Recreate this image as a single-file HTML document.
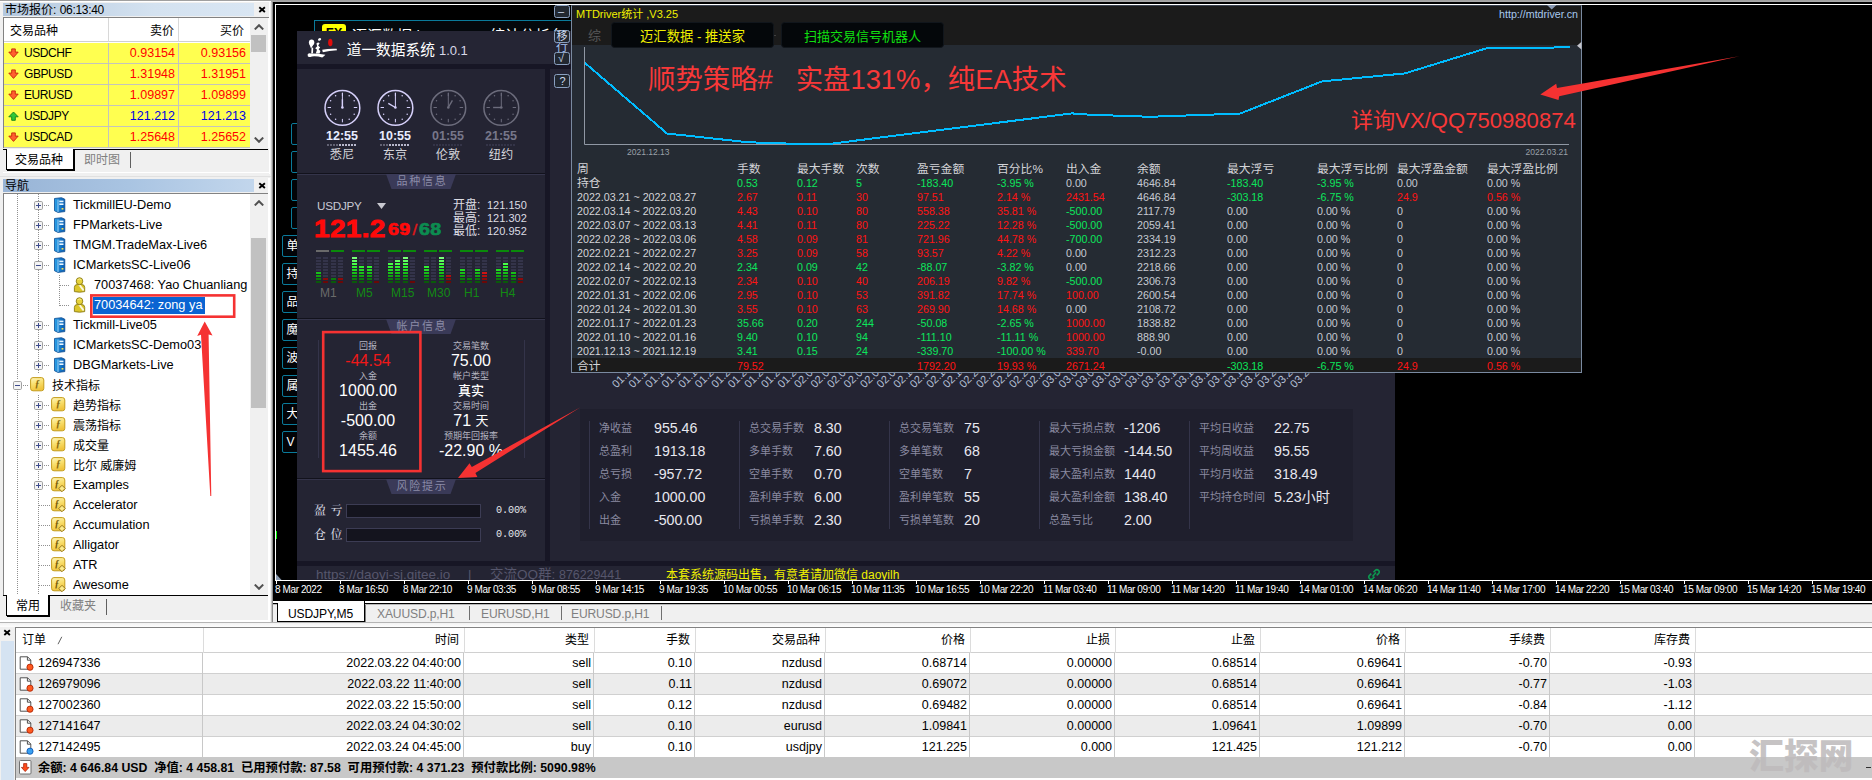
<!DOCTYPE html>
<html lang="zh-CN"><head><meta charset="utf-8"><title>MT4</title>
<style>
*{box-sizing:border-box;margin:0;padding:0}
html,body{width:1872px;height:780px;overflow:hidden;background:#f0f0f0}
body{position:relative;font-family:"Liberation Sans","Noto Sans CJK SC",sans-serif;font-size:12px;color:#000;line-height:1}
.a{position:absolute;white-space:nowrap}
.t{position:absolute;white-space:nowrap;line-height:16px;height:16px}
.r{text-align:right}
.c{text-align:center}
/* left panel */
.ui{font-size:12px}
.la{font-size:12.75px;letter-spacing:0px}
.sy{font-size:12px;letter-spacing:-.42px}
.pr{font-size:12.5px}
.cap{background:linear-gradient(90deg,#b4c8de 0%,#d4e2f0 60%,#d9e6f3 100%)}
/* mtdriver */
.m{font-size:10.7px;color:#c6cad2}
.red{color:#ff1414}.grn{color:#0ce65c}
.lbl{color:#8a8aa0;font-size:11px}
.val{color:#e8e8f0;font-size:14.2px}
</style></head><body>

<svg width="0" height="0" style="position:absolute"><defs><linearGradient id="sg" x1="0" x2="1"><stop offset="0" stop-color="#2aa0e8"/><stop offset="1" stop-color="#0a5cb0"/></linearGradient><linearGradient id="fg" x1="0" y1="0" x2=".3" y2="1"><stop offset="0" stop-color="#fef6c0"/><stop offset=".5" stop-color="#f9e070"/><stop offset="1" stop-color="#f0c43c"/></linearGradient></defs></svg>
<div class="a" style="left:0;top:0;width:1872px;height:1px;background:#a0a0a0"></div>
<div class="a" style="left:0;top:1px;width:271px;height:1px;background:#fff"></div>
<div class="a" style="left:271px;top:1px;width:1601px;height:1px;background:#a8a8a8"></div>
<div class="a" style="left:0;top:2px;width:271px;height:172px;background:#f0f0f0"></div>
<div class="a cap" style="left:3px;top:3px;width:251px;height:13px"></div>
<div class="t ui" style="left:5px;top:2px;font-size:12px">市场报价: <span style="letter-spacing:-.3px">06:13:40</span></div>
<svg class="a" style="left:258px;top:6px" width="8" height="7" viewBox="0 0 8 7"><path d="M1.300 1.200L6.900 5.900M6.900 1.200L1.300 5.900" stroke="#000" stroke-width="1.900"/></svg>
<div class="a" style="left:3px;top:17px;width:266px;height:131px;background:#fff;border-top:1px solid #828282;border-left:1px solid #828282"></div>
<div class="a" style="left:4px;top:18px;width:246px;height:24px;background:#fff;border-bottom:1px solid #d0d0d0"></div>
<div class="a" style="left:108px;top:18px;width:1px;height:24px;background:#d8d8d8"></div>
<div class="a" style="left:178px;top:18px;width:1px;height:24px;background:#d8d8d8"></div>
<div class="t ui" style="left:10px;top:23px">交易品种</div>
<div class="t ui r" style="left:110px;top:23px;width:64px">卖价</div>
<div class="t ui r" style="left:180px;top:23px;width:64px">买价</div>
<div class="a" style="left:4px;top:43px;width:246px;height:21px;background:#ffff50;border-bottom:1px solid #c4c4bc"></div>
<div class="a" style="left:108px;top:43px;width:1px;height:21px;background:#c4c4bc"></div>
<div class="a" style="left:178px;top:43px;width:1px;height:21px;background:#c4c4bc"></div>
<svg class="a" style="left:8px;top:48px" width="11" height="11" viewBox="0 0 11 11"><path d="M5.500 9.400L10.200 4.100H7.300V.9H3.700V4.100H.8Z" fill="#ff6030" stroke="#c42408" stroke-width=".9"/></svg>
<div class="t sy" style="left:24px;top:45px">USDCHF</div>
<div class="t pr r" style="left:110px;top:45px;width:65px;color:#ff0000">0.93154</div>
<div class="t pr r" style="left:180px;top:45px;width:66px;color:#ff0000">0.93156</div>
<div class="a" style="left:4px;top:64px;width:246px;height:21px;background:#ffff50;border-bottom:1px solid #c4c4bc"></div>
<div class="a" style="left:108px;top:64px;width:1px;height:21px;background:#c4c4bc"></div>
<div class="a" style="left:178px;top:64px;width:1px;height:21px;background:#c4c4bc"></div>
<svg class="a" style="left:8px;top:69px" width="11" height="11" viewBox="0 0 11 11"><path d="M5.500 9.400L10.200 4.100H7.300V.9H3.700V4.100H.8Z" fill="#ff6030" stroke="#c42408" stroke-width=".9"/></svg>
<div class="t sy" style="left:24px;top:66px">GBPUSD</div>
<div class="t pr r" style="left:110px;top:66px;width:65px;color:#ff0000">1.31948</div>
<div class="t pr r" style="left:180px;top:66px;width:66px;color:#ff0000">1.31951</div>
<div class="a" style="left:4px;top:85px;width:246px;height:21px;background:#ffff50;border-bottom:1px solid #c4c4bc"></div>
<div class="a" style="left:108px;top:85px;width:1px;height:21px;background:#c4c4bc"></div>
<div class="a" style="left:178px;top:85px;width:1px;height:21px;background:#c4c4bc"></div>
<svg class="a" style="left:8px;top:90px" width="11" height="11" viewBox="0 0 11 11"><path d="M5.500 9.400L10.200 4.100H7.300V.9H3.700V4.100H.8Z" fill="#ff6030" stroke="#c42408" stroke-width=".9"/></svg>
<div class="t sy" style="left:24px;top:87px">EURUSD</div>
<div class="t pr r" style="left:110px;top:87px;width:65px;color:#ff0000">1.09897</div>
<div class="t pr r" style="left:180px;top:87px;width:66px;color:#ff0000">1.09899</div>
<div class="a" style="left:4px;top:106px;width:246px;height:21px;background:#ffff50;border-bottom:1px solid #c4c4bc"></div>
<div class="a" style="left:108px;top:106px;width:1px;height:21px;background:#c4c4bc"></div>
<div class="a" style="left:178px;top:106px;width:1px;height:21px;background:#c4c4bc"></div>
<svg class="a" style="left:8px;top:111px" width="11" height="11" viewBox="0 0 11 11"><path d="M5.500 1L10.200 5.800H7.300V9.300H3.700V5.800H.8Z" fill="#30c838" stroke="#108018" stroke-width=".9"/></svg>
<div class="t sy" style="left:24px;top:108px">USDJPY</div>
<div class="t pr r" style="left:110px;top:108px;width:65px;color:#0000e0">121.212</div>
<div class="t pr r" style="left:180px;top:108px;width:66px;color:#0000e0">121.213</div>
<div class="a" style="left:4px;top:127px;width:246px;height:21px;background:#ffff50;border-bottom:1px solid #c4c4bc"></div>
<div class="a" style="left:108px;top:127px;width:1px;height:21px;background:#c4c4bc"></div>
<div class="a" style="left:178px;top:127px;width:1px;height:21px;background:#c4c4bc"></div>
<svg class="a" style="left:8px;top:132px" width="11" height="11" viewBox="0 0 11 11"><path d="M5.500 9.400L10.200 4.100H7.300V.9H3.700V4.100H.8Z" fill="#ff6030" stroke="#c42408" stroke-width=".9"/></svg>
<div class="t sy" style="left:24px;top:129px">USDCAD</div>
<div class="t pr r" style="left:110px;top:129px;width:65px;color:#ff0000">1.25648</div>
<div class="t pr r" style="left:180px;top:129px;width:66px;color:#ff0000">1.25652</div>
<div class="a" style="left:250px;top:18px;width:18px;height:130px;background:#f0f0f0"></div>
<svg class="a" style="left:254px;top:24px" width="10" height="6" viewBox="0 0 10 6"><path d="M.8 5.400L5 1.200L9.200 5.400" stroke="#505050" stroke-width="2" fill="none"/></svg>
<div class="a" style="left:251px;top:35px;width:15px;height:17px;background:#c1c1c1"></div>
<svg class="a" style="left:254px;top:137px" width="10" height="6" viewBox="0 0 10 6"><path d="M.8 .6L5 4.800L9.200 .6" stroke="#505050" stroke-width="2" fill="none"/></svg>
<div class="a" style="left:3px;top:149px;width:265px;height:1px;background:#000"></div>
<div class="a" style="left:6px;top:149px;width:68px;height:21px;background:#fff;border:1px solid #000;border-top:none;box-shadow:1px 1px 0 #000"></div>
<div class="t ui" style="left:15px;top:152px">交易品种</div>
<div class="t ui" style="left:84px;top:152px;color:#808080">即时图</div>
<div class="a" style="left:130px;top:152px;width:1px;height:16px;background:#606060"></div>
<div class="a" style="left:3px;top:172px;width:266px;height:1px;background:#fff"></div>
<div class="a" style="left:269px;top:2px;width:1px;height:172px;background:#fff"></div>
<div class="a" style="left:0px;top:176px;width:271px;height:1px;background:#e0e0e0"></div>
<div class="a" style="left:3px;top:179px;width:251px;height:13px;background:linear-gradient(90deg,#98b4d6,#a9c4e2 50%,#c2d6ec)"></div>
<div class="t ui" style="left:5px;top:178px;font-size:12px">导航</div>
<svg class="a" style="left:258px;top:182px" width="8" height="7" viewBox="0 0 8 7"><path d="M1.300 1.200L6.900 5.900M6.900 1.200L1.300 5.900" stroke="#000" stroke-width="1.900"/></svg>
<div class="a" style="left:3px;top:193px;width:266px;height:402px;background:#fff;border-top:1px solid #828282;border-left:1px solid #828282"></div>
<div class="a" style="left:250px;top:194px;width:18px;height:401px;background:#f0f0f0"></div>
<svg class="a" style="left:254px;top:200px" width="10" height="6" viewBox="0 0 10 6"><path d="M.8 5.400L5 1.200L9.200 5.400" stroke="#505050" stroke-width="2" fill="none"/></svg>
<div class="a" style="left:251px;top:238px;width:15px;height:170px;background:#c1c1c1"></div>
<svg class="a" style="left:254px;top:584px" width="10" height="6" viewBox="0 0 10 6"><path d="M.8 .6L5 4.800L9.200 .6" stroke="#505050" stroke-width="2" fill="none"/></svg>
<div class="a" style="left:17px;top:194px;width:1px;height:186px;background:repeating-linear-gradient(180deg,#909090 0 1px,transparent 1px 2px)"></div>
<div class="a" style="left:17px;top:391px;width:1px;height:204px;background:repeating-linear-gradient(180deg,#909090 0 1px,transparent 1px 2px)"></div>
<div class="a" style="left:38px;top:194px;width:1px;height:180px;background:repeating-linear-gradient(180deg,#909090 0 1px,transparent 1px 2px)"></div>
<div class="a" style="left:38px;top:395px;width:1px;height:200px;background:repeating-linear-gradient(180deg,#909090 0 1px,transparent 1px 2px)"></div>
<svg class="a" style="left:34px;top:201px" width="9" height="9" viewBox="0 0 9 9"><rect x=".5" y=".5" width="8" height="8" rx="1.2" fill="#f4f4f4" stroke="#a0a0a0"/><path d="M2 4.5H7M4.5 2V7" stroke="#3c4a8c" stroke-width="1"/></svg>
<div class="a" style="left:44px;top:205px;width:6px;height:1px;background:repeating-linear-gradient(90deg,#909090 0 1px,transparent 1px 2px)"></div>
<svg class="a" style="left:53px;top:197px" width="13" height="16" viewBox="0 0 13 16"><path d="M1.5 1.5L8.5 .7L11.8 2.2V14.6L5 15.4L1.5 13.8Z" fill="url(#sg)" stroke="#0a4a90" stroke-width=".8"/><path d="M5 2.6V15" stroke="#bfe4ff" stroke-width=".8"/><rect x="6.3" y="3.6" width="4.2" height="1.6" fill="#e8f6ff"/><rect x="6.3" y="6.4" width="4.2" height="1.6" fill="#e8f6ff"/><rect x="8.6" y="11" width="1.8" height="1.6" fill="#ffe24a"/></svg>
<div class="t la" style="left:73px;top:197px">TickmillEU-Demo</div>
<svg class="a" style="left:34px;top:221px" width="9" height="9" viewBox="0 0 9 9"><rect x=".5" y=".5" width="8" height="8" rx="1.2" fill="#f4f4f4" stroke="#a0a0a0"/><path d="M2 4.5H7M4.5 2V7" stroke="#3c4a8c" stroke-width="1"/></svg>
<div class="a" style="left:44px;top:225px;width:6px;height:1px;background:repeating-linear-gradient(90deg,#909090 0 1px,transparent 1px 2px)"></div>
<svg class="a" style="left:53px;top:217px" width="13" height="16" viewBox="0 0 13 16"><path d="M1.5 1.5L8.5 .7L11.8 2.2V14.6L5 15.4L1.5 13.8Z" fill="url(#sg)" stroke="#0a4a90" stroke-width=".8"/><path d="M5 2.6V15" stroke="#bfe4ff" stroke-width=".8"/><rect x="6.3" y="3.6" width="4.2" height="1.6" fill="#e8f6ff"/><rect x="6.3" y="6.4" width="4.2" height="1.6" fill="#e8f6ff"/><rect x="8.6" y="11" width="1.8" height="1.6" fill="#ffe24a"/></svg>
<div class="t la" style="left:73px;top:217px">FPMarkets-Live</div>
<svg class="a" style="left:34px;top:241px" width="9" height="9" viewBox="0 0 9 9"><rect x=".5" y=".5" width="8" height="8" rx="1.2" fill="#f4f4f4" stroke="#a0a0a0"/><path d="M2 4.5H7M4.5 2V7" stroke="#3c4a8c" stroke-width="1"/></svg>
<div class="a" style="left:44px;top:245px;width:6px;height:1px;background:repeating-linear-gradient(90deg,#909090 0 1px,transparent 1px 2px)"></div>
<svg class="a" style="left:53px;top:237px" width="13" height="16" viewBox="0 0 13 16"><path d="M1.5 1.5L8.5 .7L11.8 2.2V14.6L5 15.4L1.5 13.8Z" fill="url(#sg)" stroke="#0a4a90" stroke-width=".8"/><path d="M5 2.6V15" stroke="#bfe4ff" stroke-width=".8"/><rect x="6.3" y="3.6" width="4.2" height="1.6" fill="#e8f6ff"/><rect x="6.3" y="6.4" width="4.2" height="1.6" fill="#e8f6ff"/><rect x="8.6" y="11" width="1.8" height="1.6" fill="#ffe24a"/></svg>
<div class="t la" style="left:73px;top:237px">TMGM.TradeMax-Live6</div>
<svg class="a" style="left:34px;top:261px" width="9" height="9" viewBox="0 0 9 9"><rect x=".5" y=".5" width="8" height="8" rx="1.2" fill="#f4f4f4" stroke="#a0a0a0"/><path d="M2 4.5H7" stroke="#3c4a8c" stroke-width="1"/></svg>
<div class="a" style="left:44px;top:265px;width:6px;height:1px;background:repeating-linear-gradient(90deg,#909090 0 1px,transparent 1px 2px)"></div>
<svg class="a" style="left:53px;top:257px" width="13" height="16" viewBox="0 0 13 16"><path d="M1.5 1.5L8.5 .7L11.8 2.2V14.6L5 15.4L1.5 13.8Z" fill="url(#sg)" stroke="#0a4a90" stroke-width=".8"/><path d="M5 2.6V15" stroke="#bfe4ff" stroke-width=".8"/><rect x="6.3" y="3.6" width="4.2" height="1.6" fill="#e8f6ff"/><rect x="6.3" y="6.4" width="4.2" height="1.6" fill="#e8f6ff"/><rect x="8.6" y="11" width="1.8" height="1.6" fill="#ffe24a"/></svg>
<div class="t la" style="left:73px;top:257px">ICMarketsSC-Live06</div>
<div class="a" style="left:60px;top:285px;width:10px;height:1px;background:repeating-linear-gradient(90deg,#909090 0 1px,transparent 1px 2px)"></div>
<svg class="a" style="left:73px;top:277px" width="14" height="16" viewBox="0 0 14 16"><path d="M1.400 14.600V10.400Q1.400 7.700 4.200 7.500H8.800Q11.700 7.700 11.700 10.400V14.600Q6.500 15.800 1.400 14.600Z" fill="#dcc62a" stroke="#8a7a14" stroke-width=".9"/><path d="M5.400 8L7.600 8L11 12.200L11 13.600L9.600 13.800Z" fill="#fff" opacity=".85"/><ellipse cx="6.500" cy="4.200" rx="3.300" ry="3.500" fill="#e6d23a" stroke="#8a7a14" stroke-width=".9"/><path d="M4.600 2.600Q6.500 1.400 8.400 2.600" stroke="#f8f0a0" stroke-width=".9" fill="none"/></svg>
<div class="t la" style="left:94px;top:277px">70037468: Yao Chuanliang</div>
<div class="a" style="left:60px;top:305px;width:10px;height:1px;background:repeating-linear-gradient(90deg,#909090 0 1px,transparent 1px 2px)"></div>
<svg class="a" style="left:73px;top:297px" width="14" height="16" viewBox="0 0 14 16"><path d="M1.400 14.600V10.400Q1.400 7.700 4.200 7.500H8.800Q11.700 7.700 11.700 10.400V14.600Q6.500 15.800 1.400 14.600Z" fill="#dcc62a" stroke="#8a7a14" stroke-width=".9"/><path d="M5.400 8L7.600 8L11 12.200L11 13.600L9.600 13.800Z" fill="#fff" opacity=".85"/><ellipse cx="6.500" cy="4.200" rx="3.300" ry="3.500" fill="#e6d23a" stroke="#8a7a14" stroke-width=".9"/><path d="M4.600 2.600Q6.500 1.400 8.400 2.600" stroke="#f8f0a0" stroke-width=".9" fill="none"/></svg>
<div class="a" style="left:93px;top:297px;width:112px;height:17px;background:#0a64d2"></div>
<div class="t la" style="left:94px;top:297px;color:#fff">70034642: zong ya</div>
<svg class="a" style="left:34px;top:321px" width="9" height="9" viewBox="0 0 9 9"><rect x=".5" y=".5" width="8" height="8" rx="1.2" fill="#f4f4f4" stroke="#a0a0a0"/><path d="M2 4.5H7M4.5 2V7" stroke="#3c4a8c" stroke-width="1"/></svg>
<div class="a" style="left:44px;top:325px;width:6px;height:1px;background:repeating-linear-gradient(90deg,#909090 0 1px,transparent 1px 2px)"></div>
<svg class="a" style="left:53px;top:317px" width="13" height="16" viewBox="0 0 13 16"><path d="M1.5 1.5L8.5 .7L11.8 2.2V14.6L5 15.4L1.5 13.8Z" fill="url(#sg)" stroke="#0a4a90" stroke-width=".8"/><path d="M5 2.6V15" stroke="#bfe4ff" stroke-width=".8"/><rect x="6.3" y="3.6" width="4.2" height="1.6" fill="#e8f6ff"/><rect x="6.3" y="6.4" width="4.2" height="1.6" fill="#e8f6ff"/><rect x="8.6" y="11" width="1.8" height="1.6" fill="#ffe24a"/></svg>
<div class="t la" style="left:73px;top:317px">Tickmill-Live05</div>
<svg class="a" style="left:34px;top:341px" width="9" height="9" viewBox="0 0 9 9"><rect x=".5" y=".5" width="8" height="8" rx="1.2" fill="#f4f4f4" stroke="#a0a0a0"/><path d="M2 4.5H7M4.5 2V7" stroke="#3c4a8c" stroke-width="1"/></svg>
<div class="a" style="left:44px;top:345px;width:6px;height:1px;background:repeating-linear-gradient(90deg,#909090 0 1px,transparent 1px 2px)"></div>
<svg class="a" style="left:53px;top:337px" width="13" height="16" viewBox="0 0 13 16"><path d="M1.5 1.5L8.5 .7L11.8 2.2V14.6L5 15.4L1.5 13.8Z" fill="url(#sg)" stroke="#0a4a90" stroke-width=".8"/><path d="M5 2.6V15" stroke="#bfe4ff" stroke-width=".8"/><rect x="6.3" y="3.6" width="4.2" height="1.6" fill="#e8f6ff"/><rect x="6.3" y="6.4" width="4.2" height="1.6" fill="#e8f6ff"/><rect x="8.6" y="11" width="1.8" height="1.6" fill="#ffe24a"/></svg>
<div class="t la" style="left:73px;top:337px">ICMarketsSC-Demo03</div>
<svg class="a" style="left:34px;top:361px" width="9" height="9" viewBox="0 0 9 9"><rect x=".5" y=".5" width="8" height="8" rx="1.2" fill="#f4f4f4" stroke="#a0a0a0"/><path d="M2 4.5H7M4.5 2V7" stroke="#3c4a8c" stroke-width="1"/></svg>
<div class="a" style="left:44px;top:365px;width:6px;height:1px;background:repeating-linear-gradient(90deg,#909090 0 1px,transparent 1px 2px)"></div>
<svg class="a" style="left:53px;top:357px" width="13" height="16" viewBox="0 0 13 16"><path d="M1.5 1.5L8.5 .7L11.8 2.2V14.6L5 15.4L1.5 13.8Z" fill="url(#sg)" stroke="#0a4a90" stroke-width=".8"/><path d="M5 2.6V15" stroke="#bfe4ff" stroke-width=".8"/><rect x="6.3" y="3.6" width="4.2" height="1.6" fill="#e8f6ff"/><rect x="6.3" y="6.4" width="4.2" height="1.6" fill="#e8f6ff"/><rect x="8.6" y="11" width="1.8" height="1.6" fill="#ffe24a"/></svg>
<div class="t la" style="left:73px;top:357px">DBGMarkets-Live</div>
<svg class="a" style="left:13px;top:381px" width="9" height="9" viewBox="0 0 9 9"><rect x=".5" y=".5" width="8" height="8" rx="1.2" fill="#f4f4f4" stroke="#a0a0a0"/><path d="M2 4.5H7" stroke="#3c4a8c" stroke-width="1"/></svg>
<div class="a" style="left:23px;top:385px;width:6px;height:1px;background:repeating-linear-gradient(90deg,#909090 0 1px,transparent 1px 2px)"></div>
<svg class="a" style="left:30px;top:377px" width="17" height="17" viewBox="0 0 17 17"><rect x=".6" y=".6" width="13.2" height="13.200" rx="2.4" fill="url(#fg)" stroke="#c49c1c" stroke-width="1"/><text x="7.200" y="10" font-family="Liberation Serif,serif" font-style="italic" font-weight="bold" font-size="10" text-anchor="middle" fill="#8a6a10">ƒ</text></svg>
<div class="t ui" style="left:52px;top:378px">技术指标</div>
<svg class="a" style="left:34px;top:401px" width="9" height="9" viewBox="0 0 9 9"><rect x=".5" y=".5" width="8" height="8" rx="1.2" fill="#f4f4f4" stroke="#a0a0a0"/><path d="M2 4.5H7M4.5 2V7" stroke="#3c4a8c" stroke-width="1"/></svg>
<div class="a" style="left:44px;top:405px;width:6px;height:1px;background:repeating-linear-gradient(90deg,#909090 0 1px,transparent 1px 2px)"></div>
<svg class="a" style="left:51px;top:397px" width="17" height="17" viewBox="0 0 17 17"><rect x=".6" y=".6" width="13.2" height="13.200" rx="2.4" fill="url(#fg)" stroke="#c49c1c" stroke-width="1"/><text x="7.200" y="10" font-family="Liberation Serif,serif" font-style="italic" font-weight="bold" font-size="10" text-anchor="middle" fill="#8a6a10">ƒ</text></svg>
<div class="t ui" style="left:73px;top:398px">趋势指标</div>
<svg class="a" style="left:34px;top:421px" width="9" height="9" viewBox="0 0 9 9"><rect x=".5" y=".5" width="8" height="8" rx="1.2" fill="#f4f4f4" stroke="#a0a0a0"/><path d="M2 4.5H7M4.5 2V7" stroke="#3c4a8c" stroke-width="1"/></svg>
<div class="a" style="left:44px;top:425px;width:6px;height:1px;background:repeating-linear-gradient(90deg,#909090 0 1px,transparent 1px 2px)"></div>
<svg class="a" style="left:51px;top:417px" width="17" height="17" viewBox="0 0 17 17"><rect x=".6" y=".6" width="13.2" height="13.200" rx="2.4" fill="url(#fg)" stroke="#c49c1c" stroke-width="1"/><text x="7.200" y="10" font-family="Liberation Serif,serif" font-style="italic" font-weight="bold" font-size="10" text-anchor="middle" fill="#8a6a10">ƒ</text></svg>
<div class="t ui" style="left:73px;top:418px">震荡指标</div>
<svg class="a" style="left:34px;top:441px" width="9" height="9" viewBox="0 0 9 9"><rect x=".5" y=".5" width="8" height="8" rx="1.2" fill="#f4f4f4" stroke="#a0a0a0"/><path d="M2 4.5H7M4.5 2V7" stroke="#3c4a8c" stroke-width="1"/></svg>
<div class="a" style="left:44px;top:445px;width:6px;height:1px;background:repeating-linear-gradient(90deg,#909090 0 1px,transparent 1px 2px)"></div>
<svg class="a" style="left:51px;top:437px" width="17" height="17" viewBox="0 0 17 17"><rect x=".6" y=".6" width="13.2" height="13.200" rx="2.4" fill="url(#fg)" stroke="#c49c1c" stroke-width="1"/><text x="7.200" y="10" font-family="Liberation Serif,serif" font-style="italic" font-weight="bold" font-size="10" text-anchor="middle" fill="#8a6a10">ƒ</text></svg>
<div class="t ui" style="left:73px;top:438px">成交量</div>
<svg class="a" style="left:34px;top:461px" width="9" height="9" viewBox="0 0 9 9"><rect x=".5" y=".5" width="8" height="8" rx="1.2" fill="#f4f4f4" stroke="#a0a0a0"/><path d="M2 4.5H7M4.5 2V7" stroke="#3c4a8c" stroke-width="1"/></svg>
<div class="a" style="left:44px;top:465px;width:6px;height:1px;background:repeating-linear-gradient(90deg,#909090 0 1px,transparent 1px 2px)"></div>
<svg class="a" style="left:51px;top:457px" width="17" height="17" viewBox="0 0 17 17"><rect x=".6" y=".6" width="13.2" height="13.200" rx="2.4" fill="url(#fg)" stroke="#c49c1c" stroke-width="1"/><text x="7.200" y="10" font-family="Liberation Serif,serif" font-style="italic" font-weight="bold" font-size="10" text-anchor="middle" fill="#8a6a10">ƒ</text></svg>
<div class="t ui" style="left:73px;top:458px">比尔 威廉姆</div>
<svg class="a" style="left:34px;top:481px" width="9" height="9" viewBox="0 0 9 9"><rect x=".5" y=".5" width="8" height="8" rx="1.2" fill="#f4f4f4" stroke="#a0a0a0"/><path d="M2 4.5H7M4.5 2V7" stroke="#3c4a8c" stroke-width="1"/></svg>
<div class="a" style="left:44px;top:485px;width:6px;height:1px;background:repeating-linear-gradient(90deg,#909090 0 1px,transparent 1px 2px)"></div>
<svg class="a" style="left:51px;top:477px" width="17" height="17" viewBox="0 0 17 17"><rect x=".6" y=".6" width="13.2" height="13.200" rx="2.4" fill="url(#fg)" stroke="#c49c1c" stroke-width="1"/><text x="5.800" y="9.600" font-family="Liberation Serif,serif" font-style="italic" font-weight="bold" font-size="9.500" text-anchor="middle" fill="#7a5c08">ƒ</text><path d="M11 8.300L14.200 11.500L11 14.700L7.800 11.500Z" fill="#fbe98a" stroke="#8a6a10" stroke-width=".9"/></svg>
<div class="t la" style="left:73px;top:477px">Examples</div>
<div class="a" style="left:39px;top:505px;width:11px;height:1px;background:repeating-linear-gradient(90deg,#909090 0 1px,transparent 1px 2px)"></div>
<svg class="a" style="left:51px;top:497px" width="17" height="17" viewBox="0 0 17 17"><rect x=".6" y=".6" width="13.2" height="13.200" rx="2.4" fill="url(#fg)" stroke="#c49c1c" stroke-width="1"/><text x="5.800" y="9.600" font-family="Liberation Serif,serif" font-style="italic" font-weight="bold" font-size="9.500" text-anchor="middle" fill="#7a5c08">ƒ</text><path d="M11 8.300L14.200 11.500L11 14.700L7.800 11.500Z" fill="#fbe98a" stroke="#8a6a10" stroke-width=".9"/></svg>
<div class="t la" style="left:73px;top:497px">Accelerator</div>
<div class="a" style="left:39px;top:525px;width:11px;height:1px;background:repeating-linear-gradient(90deg,#909090 0 1px,transparent 1px 2px)"></div>
<svg class="a" style="left:51px;top:517px" width="17" height="17" viewBox="0 0 17 17"><rect x=".6" y=".6" width="13.2" height="13.200" rx="2.4" fill="url(#fg)" stroke="#c49c1c" stroke-width="1"/><text x="5.800" y="9.600" font-family="Liberation Serif,serif" font-style="italic" font-weight="bold" font-size="9.500" text-anchor="middle" fill="#7a5c08">ƒ</text><path d="M11 8.300L14.200 11.500L11 14.700L7.800 11.500Z" fill="#fbe98a" stroke="#8a6a10" stroke-width=".9"/></svg>
<div class="t la" style="left:73px;top:517px">Accumulation</div>
<div class="a" style="left:39px;top:545px;width:11px;height:1px;background:repeating-linear-gradient(90deg,#909090 0 1px,transparent 1px 2px)"></div>
<svg class="a" style="left:51px;top:537px" width="17" height="17" viewBox="0 0 17 17"><rect x=".6" y=".6" width="13.2" height="13.200" rx="2.4" fill="url(#fg)" stroke="#c49c1c" stroke-width="1"/><text x="5.800" y="9.600" font-family="Liberation Serif,serif" font-style="italic" font-weight="bold" font-size="9.500" text-anchor="middle" fill="#7a5c08">ƒ</text><path d="M11 8.300L14.200 11.500L11 14.700L7.800 11.500Z" fill="#fbe98a" stroke="#8a6a10" stroke-width=".9"/></svg>
<div class="t la" style="left:73px;top:537px">Alligator</div>
<div class="a" style="left:39px;top:565px;width:11px;height:1px;background:repeating-linear-gradient(90deg,#909090 0 1px,transparent 1px 2px)"></div>
<svg class="a" style="left:51px;top:557px" width="17" height="17" viewBox="0 0 17 17"><rect x=".6" y=".6" width="13.2" height="13.200" rx="2.4" fill="url(#fg)" stroke="#c49c1c" stroke-width="1"/><text x="5.800" y="9.600" font-family="Liberation Serif,serif" font-style="italic" font-weight="bold" font-size="9.500" text-anchor="middle" fill="#7a5c08">ƒ</text><path d="M11 8.300L14.200 11.500L11 14.700L7.800 11.500Z" fill="#fbe98a" stroke="#8a6a10" stroke-width=".9"/></svg>
<div class="t la" style="left:73px;top:557px">ATR</div>
<div class="a" style="left:39px;top:585px;width:11px;height:1px;background:repeating-linear-gradient(90deg,#909090 0 1px,transparent 1px 2px)"></div>
<svg class="a" style="left:51px;top:577px" width="17" height="17" viewBox="0 0 17 17"><rect x=".6" y=".6" width="13.2" height="13.200" rx="2.4" fill="url(#fg)" stroke="#c49c1c" stroke-width="1"/><text x="5.800" y="9.600" font-family="Liberation Serif,serif" font-style="italic" font-weight="bold" font-size="9.500" text-anchor="middle" fill="#7a5c08">ƒ</text><path d="M11 8.300L14.200 11.500L11 14.700L7.800 11.500Z" fill="#fbe98a" stroke="#8a6a10" stroke-width=".9"/></svg>
<div class="t la" style="left:73px;top:577px">Awesome</div>
<div class="a" style="left:59px;top:275px;width:1px;height:31px;background:repeating-linear-gradient(180deg,#909090 0 1px,transparent 1px 2px)"></div>
<div class="a" style="left:3px;top:595px;width:265px;height:1px;background:#000"></div>
<div class="a" style="left:6px;top:595px;width:43px;height:21px;background:#fff;border:1px solid #000;border-top:none;box-shadow:1px 1px 0 #000"></div>
<div class="t ui" style="left:16px;top:598px">常用</div>
<div class="t ui" style="left:60px;top:598px;color:#808080">收藏夹</div>
<div class="a" style="left:106px;top:599px;width:1px;height:16px;background:#606060"></div>
<div class="a" style="left:0px;top:620px;width:270px;height:2px;background:#fff"></div>
<div class="a" style="left:268px;top:178px;width:2px;height:443px;background:#fff"></div>
<div class="a" style="left:271px;top:2px;width:2px;height:600px;background:linear-gradient(90deg,#e0e0e0,#707070)"></div>
<div class="a" style="left:273px;top:2px;width:1599px;height:599px;background:#000"></div>
<div class="a" style="left:275px;top:4px;width:1597px;height:1px;background:#fff"></div>
<div class="a" style="left:275px;top:4px;width:1px;height:577px;background:#fff"></div>
<div class="a" style="left:276px;top:531px;width:1px;height:8px;background:#00f000"></div>
<svg class="a" style="left:276px;top:574px" width="7" height="7" viewBox="0 0 7 7"><path d="M0 0L6.5 7H0Z" fill="#8a9ab0"/></svg>
<div class="a" style="left:314px;top:20px;width:260px;height:30px;background:#04080c;border:1px solid #0a7a9a"></div>
<div class="a" style="left:322px;top:24px;width:24px;height:16px;background:#ffff00;border-radius:3px;color:#000;font-weight:bold;font-size:13px;text-align:center;line-height:18px">FX</div>
<div class="a" style="left:352px;top:28px;font-size:15px;color:#fff;line-height:16px">迈汇数据 | V 1.6.5</div>
<div class="a" style="left:490px;top:28px;font-size:15px;color:#fff;line-height:16px">统计分析台</div>
<div class="a" style="left:291px;top:123px;width:30px;height:22px;border:1px solid #0a7a9a;border-radius:2px;background:#020408;color:#fff;font-size:12px;line-height:20px;padding-left:3.5px"></div>
<div class="a" style="left:291px;top:151px;width:30px;height:22px;border:1px solid #0a7a9a;border-radius:2px;background:#020408;color:#fff;font-size:12px;line-height:20px;padding-left:3.5px"></div>
<div class="a" style="left:291px;top:179px;width:30px;height:22px;border:1px solid #0a7a9a;border-radius:2px;background:#020408;color:#fff;font-size:12px;line-height:20px;padding-left:3.5px"></div>
<div class="a" style="left:291px;top:207px;width:30px;height:22px;border:1px solid #0a7a9a;border-radius:2px;background:#020408;color:#fff;font-size:12px;line-height:20px;padding-left:3.5px"></div>
<div class="a" style="left:282px;top:235px;width:30px;height:22px;border:1px solid #0a7a9a;border-radius:2px;background:#020408;color:#fff;font-size:12px;line-height:20px;padding-left:3.5px">单</div>
<div class="a" style="left:282px;top:263px;width:30px;height:22px;border:1px solid #0a7a9a;border-radius:2px;background:#020408;color:#fff;font-size:12px;line-height:20px;padding-left:3.5px">持</div>
<div class="a" style="left:282px;top:291px;width:30px;height:22px;border:1px solid #0a7a9a;border-radius:2px;background:#020408;color:#fff;font-size:12px;line-height:20px;padding-left:3.5px">品</div>
<div class="a" style="left:282px;top:319px;width:30px;height:22px;border:1px solid #0a7a9a;border-radius:2px;background:#020408;color:#fff;font-size:12px;line-height:20px;padding-left:3.5px">魔</div>
<div class="a" style="left:282px;top:347px;width:30px;height:22px;border:1px solid #0a7a9a;border-radius:2px;background:#020408;color:#fff;font-size:12px;line-height:20px;padding-left:3.5px">波</div>
<div class="a" style="left:282px;top:375px;width:30px;height:22px;border:1px solid #0a7a9a;border-radius:2px;background:#020408;color:#fff;font-size:12px;line-height:20px;padding-left:3.5px">属</div>
<div class="a" style="left:282px;top:403px;width:30px;height:22px;border:1px solid #0a7a9a;border-radius:2px;background:#020408;color:#fff;font-size:12px;line-height:20px;padding-left:3.5px">大</div>
<div class="a" style="left:282px;top:431px;width:30px;height:22px;border:1px solid #0a7a9a;border-radius:2px;background:#020408;color:#fff;font-size:12px;line-height:20px;padding-left:3.5px">V</div>
<div class="a" style="left:297px;top:31px;width:1098px;height:550px;background:#171625"></div>
<div class="a" style="left:297px;top:31px;width:1098px;height:33px;background:#252534"></div>
<div class="a" style="left:297px;top:69px;width:248px;height:492px;background:#242433"></div>
<div class="a" style="left:550px;top:69px;width:845px;height:492px;background:#242433"></div>
<div class="a" style="left:297px;top:566px;width:1098px;height:15px;background:#242433"></div>
<svg class="a" style="left:307px;top:37px" width="32" height="22" viewBox="0 0 32 22">
<ellipse cx="4.600" cy="5.400" rx="2.700" ry="2.900" fill="#fff"/>
<path d="M2.400 7.200L4 11.500L6.200 8Z" fill="#fff"/>
<ellipse cx="12.600" cy="2.400" rx="1.600" ry="1.300" fill="#fff" transform="rotate(-20 12.600 2.400)"/>
<path d="M9.400 6.400Q11.400 4.600 12.600 6.200L11.200 8.600L13.200 10.400L11.600 12.200L13.400 14L12.600 16.600L8.800 16.400L10 12.800L8.200 11.200L10.200 9.200Z" fill="#fff"/>
<path d="M4.600 10.400L6.200 10.800L6 16.200L4.200 16.600Z" fill="#fff"/>
<path d="M.600 17.600Q1.600 15.600 4 16.400Q10 16.200 18.400 17.800Q17 19.600 15.200 20.400Q10 19 5 19.400Q2 20.600 .900 19.600Z" fill="#fff"/>
<path d="M15.200 12.800Q22 11.400 29.600 11.800L30 13.200Q22 13.800 15.800 15.200Z" fill="#fff"/>
<ellipse cx="23.300" cy="5.500" rx="2.200" ry="3.800" fill="#e00c0c"/></svg>
<div class="a" style="left:346.700px;top:39.500px;font-size:14.7px;color:#fff;line-height:20px;letter-spacing:0">道一数据系统 <span style="font-size:13px;color:#d8d8e8;letter-spacing:0">1.0.1</span></div>
<svg class="a" style="left:322px;top:87px" width="41" height="41" viewBox="-20.40 -20.50 41 41"><circle cy=".4" r="17.400" fill="none" stroke="#d6d0fa" stroke-width="1.500"/><line x1="0.00" y1="-11.40" x2="0.00" y2="-14.80" stroke="#d6d0fa" stroke-width="1"/><circle cx="6.80" cy="-11.78" r=".75" fill="#d6d0fa"/><circle cx="11.78" cy="-6.80" r=".75" fill="#d6d0fa"/><line x1="11.40" y1="-0.00" x2="14.80" y2="-0.00" stroke="#d6d0fa" stroke-width="1"/><circle cx="11.78" cy="6.80" r=".75" fill="#d6d0fa"/><circle cx="6.80" cy="11.78" r=".75" fill="#d6d0fa"/><line x1="0.00" y1="11.40" x2="0.00" y2="14.80" stroke="#d6d0fa" stroke-width="1"/><circle cx="-6.80" cy="11.78" r=".75" fill="#d6d0fa"/><circle cx="-11.78" cy="6.80" r=".75" fill="#d6d0fa"/><line x1="-11.40" y1="0.00" x2="-14.80" y2="0.00" stroke="#d6d0fa" stroke-width="1"/><circle cx="-11.78" cy="-6.80" r=".75" fill="#d6d0fa"/><circle cx="-6.80" cy="-11.78" r=".75" fill="#d6d0fa"/><line x1="0" y1="0" x2="0.00" y2="-14.60" stroke="#d6d0fa" stroke-width="1"/><line x1="0" y1="0" x2="0.00" y2="-8.20" stroke="#d6d0fa" stroke-width="1.400"/><circle r="1.300" fill="#d6d0fa"/></svg>
<div class="a c" style="left:317px;top:128px;width:50px;font-size:12.5px;font-weight:bold;color:#e8ecff;line-height:16px">12:55</div>
<div class="a" style="left:327px;top:143.5px;width:2.200px;height:2.200px;border-radius:1.100px;background:#77778a"></div>
<div class="a" style="left:330px;top:143.5px;width:2.200px;height:2.200px;border-radius:1.100px;background:#77778a"></div>
<div class="a" style="left:333px;top:143.5px;width:2.200px;height:2.200px;border-radius:1.100px;background:#77778a"></div>
<div class="a" style="left:336px;top:143.5px;width:2.200px;height:2.200px;border-radius:1.100px;background:#77778a"></div>
<div class="a" style="left:339px;top:143.5px;width:2.200px;height:2.200px;border-radius:1.100px;background:#e8e8ff"></div>
<div class="a" style="left:342px;top:143.5px;width:2.200px;height:2.200px;border-radius:1.100px;background:#e8e8ff"></div>
<div class="a" style="left:345px;top:143.5px;width:2.200px;height:2.200px;border-radius:1.100px;background:#e8e8ff"></div>
<div class="a" style="left:348px;top:143.5px;width:2.200px;height:2.200px;border-radius:1.100px;background:#e8e8ff"></div>
<div class="a" style="left:351px;top:143.5px;width:2.200px;height:2.200px;border-radius:1.100px;background:#e8e8ff"></div>
<div class="a" style="left:354px;top:143.5px;width:2.200px;height:2.200px;border-radius:1.100px;background:#e8e8ff"></div>
<div class="a c" style="left:317px;top:147px;width:50px;font-size:12.2px;color:#d2d2d8;line-height:16px">悉尼</div>
<svg class="a" style="left:375px;top:87px" width="41" height="41" viewBox="-20.40 -20.50 41 41"><circle cy=".4" r="17.400" fill="none" stroke="#d6d0fa" stroke-width="1.500"/><line x1="0.00" y1="-11.40" x2="0.00" y2="-14.80" stroke="#d6d0fa" stroke-width="1"/><circle cx="6.80" cy="-11.78" r=".75" fill="#d6d0fa"/><circle cx="11.78" cy="-6.80" r=".75" fill="#d6d0fa"/><line x1="11.40" y1="-0.00" x2="14.80" y2="-0.00" stroke="#d6d0fa" stroke-width="1"/><circle cx="11.78" cy="6.80" r=".75" fill="#d6d0fa"/><circle cx="6.80" cy="11.78" r=".75" fill="#d6d0fa"/><line x1="0.00" y1="11.40" x2="0.00" y2="14.80" stroke="#d6d0fa" stroke-width="1"/><circle cx="-6.80" cy="11.78" r=".75" fill="#d6d0fa"/><circle cx="-11.78" cy="6.80" r=".75" fill="#d6d0fa"/><line x1="-11.40" y1="0.00" x2="-14.80" y2="0.00" stroke="#d6d0fa" stroke-width="1"/><circle cx="-11.78" cy="-6.80" r=".75" fill="#d6d0fa"/><circle cx="-6.80" cy="-11.78" r=".75" fill="#d6d0fa"/><line x1="0" y1="0" x2="0.00" y2="-14.60" stroke="#d6d0fa" stroke-width="1"/><line x1="0" y1="0" x2="-7.10" y2="-4.10" stroke="#d6d0fa" stroke-width="1.400"/><circle r="1.300" fill="#d6d0fa"/></svg>
<div class="a c" style="left:370px;top:128px;width:50px;font-size:12.5px;font-weight:bold;color:#e8ecff;line-height:16px">10:55</div>
<div class="a" style="left:380px;top:143.5px;width:2.200px;height:2.200px;border-radius:1.100px;background:#77778a"></div>
<div class="a" style="left:383px;top:143.5px;width:2.200px;height:2.200px;border-radius:1.100px;background:#77778a"></div>
<div class="a" style="left:386px;top:143.5px;width:2.200px;height:2.200px;border-radius:1.100px;background:#77778a"></div>
<div class="a" style="left:389px;top:143.5px;width:2.200px;height:2.200px;border-radius:1.100px;background:#e8e8ff"></div>
<div class="a" style="left:392px;top:143.5px;width:2.200px;height:2.200px;border-radius:1.100px;background:#e8e8ff"></div>
<div class="a" style="left:395px;top:143.5px;width:2.200px;height:2.200px;border-radius:1.100px;background:#e8e8ff"></div>
<div class="a" style="left:398px;top:143.5px;width:2.200px;height:2.200px;border-radius:1.100px;background:#e8e8ff"></div>
<div class="a" style="left:401px;top:143.5px;width:2.200px;height:2.200px;border-radius:1.100px;background:#e8e8ff"></div>
<div class="a" style="left:404px;top:143.5px;width:2.200px;height:2.200px;border-radius:1.100px;background:#e8e8ff"></div>
<div class="a" style="left:407px;top:143.5px;width:2.200px;height:2.200px;border-radius:1.100px;background:#e8e8ff"></div>
<div class="a c" style="left:370px;top:147px;width:50px;font-size:12.2px;color:#d2d2d8;line-height:16px">东京</div>
<svg class="a" style="left:428px;top:87px" width="41" height="41" viewBox="-20.30 -20.50 41 41"><circle cy=".4" r="17.400" fill="none" stroke="#6c6c7c" stroke-width="1.500"/><line x1="0.00" y1="-11.40" x2="0.00" y2="-14.80" stroke="#6c6c7c" stroke-width="1"/><circle cx="6.80" cy="-11.78" r=".75" fill="#6c6c7c"/><circle cx="11.78" cy="-6.80" r=".75" fill="#6c6c7c"/><line x1="11.40" y1="-0.00" x2="14.80" y2="-0.00" stroke="#6c6c7c" stroke-width="1"/><circle cx="11.78" cy="6.80" r=".75" fill="#6c6c7c"/><circle cx="6.80" cy="11.78" r=".75" fill="#6c6c7c"/><line x1="0.00" y1="11.40" x2="0.00" y2="14.80" stroke="#6c6c7c" stroke-width="1"/><circle cx="-6.80" cy="11.78" r=".75" fill="#6c6c7c"/><circle cx="-11.78" cy="6.80" r=".75" fill="#6c6c7c"/><line x1="-11.40" y1="0.00" x2="-14.80" y2="0.00" stroke="#6c6c7c" stroke-width="1"/><circle cx="-11.78" cy="-6.80" r=".75" fill="#6c6c7c"/><circle cx="-6.80" cy="-11.78" r=".75" fill="#6c6c7c"/><line x1="0" y1="0" x2="0.00" y2="-14.60" stroke="#6c6c7c" stroke-width="1"/><line x1="0" y1="0" x2="4.10" y2="-7.10" stroke="#6c6c7c" stroke-width="1.400"/><circle r="1.300" fill="#6c6c7c"/></svg>
<div class="a c" style="left:423px;top:128px;width:50px;font-size:12.5px;font-weight:bold;color:#77778a;line-height:16px">01:55</div>
<div class="a" style="left:433px;top:143.5px;width:2.200px;height:2.200px;border-radius:1.100px;background:#3a3a50"></div>
<div class="a" style="left:436px;top:143.5px;width:2.200px;height:2.200px;border-radius:1.100px;background:#3a3a50"></div>
<div class="a" style="left:439px;top:143.5px;width:2.200px;height:2.200px;border-radius:1.100px;background:#3a3a50"></div>
<div class="a" style="left:442px;top:143.5px;width:2.200px;height:2.200px;border-radius:1.100px;background:#3a3a50"></div>
<div class="a" style="left:445px;top:143.5px;width:2.200px;height:2.200px;border-radius:1.100px;background:#3a3a50"></div>
<div class="a" style="left:448px;top:143.5px;width:2.200px;height:2.200px;border-radius:1.100px;background:#3a3a50"></div>
<div class="a" style="left:451px;top:143.5px;width:2.200px;height:2.200px;border-radius:1.100px;background:#3a3a50"></div>
<div class="a" style="left:454px;top:143.5px;width:2.200px;height:2.200px;border-radius:1.100px;background:#3a3a50"></div>
<div class="a" style="left:457px;top:143.5px;width:2.200px;height:2.200px;border-radius:1.100px;background:#3a3a50"></div>
<div class="a" style="left:460px;top:143.5px;width:2.200px;height:2.200px;border-radius:1.100px;background:#3a3a50"></div>
<div class="a c" style="left:423px;top:147px;width:50px;font-size:12.2px;color:#d2d2d8;line-height:16px">伦敦</div>
<svg class="a" style="left:481px;top:87px" width="41" height="41" viewBox="-20.30 -20.50 41 41"><circle cy=".4" r="17.400" fill="none" stroke="#6c6c7c" stroke-width="1.500"/><line x1="0.00" y1="-11.40" x2="0.00" y2="-14.80" stroke="#6c6c7c" stroke-width="1"/><circle cx="6.80" cy="-11.78" r=".75" fill="#6c6c7c"/><circle cx="11.78" cy="-6.80" r=".75" fill="#6c6c7c"/><line x1="11.40" y1="-0.00" x2="14.80" y2="-0.00" stroke="#6c6c7c" stroke-width="1"/><circle cx="11.78" cy="6.80" r=".75" fill="#6c6c7c"/><circle cx="6.80" cy="11.78" r=".75" fill="#6c6c7c"/><line x1="0.00" y1="11.40" x2="0.00" y2="14.80" stroke="#6c6c7c" stroke-width="1"/><circle cx="-6.80" cy="11.78" r=".75" fill="#6c6c7c"/><circle cx="-11.78" cy="6.80" r=".75" fill="#6c6c7c"/><line x1="-11.40" y1="0.00" x2="-14.80" y2="0.00" stroke="#6c6c7c" stroke-width="1"/><circle cx="-11.78" cy="-6.80" r=".75" fill="#6c6c7c"/><circle cx="-6.80" cy="-11.78" r=".75" fill="#6c6c7c"/><line x1="0" y1="0" x2="0.00" y2="-14.60" stroke="#6c6c7c" stroke-width="1"/><line x1="0" y1="0" x2="-8.20" y2="0.00" stroke="#6c6c7c" stroke-width="1.400"/><circle r="1.300" fill="#6c6c7c"/></svg>
<div class="a c" style="left:476px;top:128px;width:50px;font-size:12.5px;font-weight:bold;color:#77778a;line-height:16px">21:55</div>
<div class="a" style="left:486px;top:143.5px;width:2.200px;height:2.200px;border-radius:1.100px;background:#3a3a50"></div>
<div class="a" style="left:489px;top:143.5px;width:2.200px;height:2.200px;border-radius:1.100px;background:#3a3a50"></div>
<div class="a" style="left:492px;top:143.5px;width:2.200px;height:2.200px;border-radius:1.100px;background:#3a3a50"></div>
<div class="a" style="left:495px;top:143.5px;width:2.200px;height:2.200px;border-radius:1.100px;background:#3a3a50"></div>
<div class="a" style="left:498px;top:143.5px;width:2.200px;height:2.200px;border-radius:1.100px;background:#3a3a50"></div>
<div class="a" style="left:501px;top:143.5px;width:2.200px;height:2.200px;border-radius:1.100px;background:#3a3a50"></div>
<div class="a" style="left:504px;top:143.5px;width:2.200px;height:2.200px;border-radius:1.100px;background:#3a3a50"></div>
<div class="a" style="left:507px;top:143.5px;width:2.200px;height:2.200px;border-radius:1.100px;background:#3a3a50"></div>
<div class="a" style="left:510px;top:143.5px;width:2.200px;height:2.200px;border-radius:1.100px;background:#3a3a50"></div>
<div class="a" style="left:513px;top:143.5px;width:2.200px;height:2.200px;border-radius:1.100px;background:#3a3a50"></div>
<div class="a c" style="left:476px;top:147px;width:50px;font-size:12.2px;color:#d2d2d8;line-height:16px">纽约</div>
<div class="a" style="left:297px;top:173px;width:248px;height:1px;background:#12121c"></div>
<div class="a" style="left:297px;top:174px;width:248px;height:1px;background:#34344a"></div>
<svg class="a" style="left:386px;top:174px" width="70" height="15" viewBox="0 0 70 15"><path d="M0 0H70L64.500 15H5.500Z" fill="#3a3a58"/></svg>
<div class="a c" style="left:386px;top:174px;width:70px;font-size:11px;letter-spacing:1.7px;color:#8c8ca8;line-height:14px;padding-left:2px">品种信息</div>
<div class="a" style="left:297px;top:318px;width:248px;height:1px;background:#12121c"></div>
<div class="a" style="left:297px;top:319px;width:248px;height:1px;background:#34344a"></div>
<svg class="a" style="left:386px;top:319px" width="70" height="15" viewBox="0 0 70 15"><path d="M0 0H70L64.500 15H5.500Z" fill="#3a3a58"/></svg>
<div class="a c" style="left:386px;top:319px;width:70px;font-size:11px;letter-spacing:1.7px;color:#8c8ca8;line-height:14px;padding-left:2px">帐户信息</div>
<div class="a" style="left:297px;top:478px;width:248px;height:1px;background:#12121c"></div>
<div class="a" style="left:297px;top:479px;width:248px;height:1px;background:#34344a"></div>
<svg class="a" style="left:386px;top:479px" width="70" height="15" viewBox="0 0 70 15"><path d="M0 0H70L64.500 15H5.500Z" fill="#3a3a58"/></svg>
<div class="a c" style="left:386px;top:479px;width:70px;font-size:11px;letter-spacing:1.7px;color:#8c8ca8;line-height:14px;padding-left:2px">风险提示</div>
<div class="a" style="left:317px;top:198px;font-size:11.7px;letter-spacing:-.25px;color:#c8c8d4;line-height:16px">USDJPY</div>
<svg class="a" style="left:377px;top:203px" width="9" height="6" viewBox="0 0 9 6"><path d="M0 0H9L4.500 6Z" fill="#c8c8d0"/></svg>
<div class="a" style="left:314px;top:214px;font-size:23.5px;font-weight:bold;color:#ff0a0a;line-height:30px;transform-origin:0 0;transform:scaleX(1.19);-webkit-text-stroke:.8px #ff0a0a;letter-spacing:.3px">121.2</div>
<div class="a" style="left:388px;top:220px;font-size:16px;font-weight:bold;line-height:20px;transform-origin:0 0;transform:scaleX(1.22);-webkit-text-stroke:.7px;letter-spacing:.4px"><span style="color:#ff0a0a">69</span><span style="color:#e01818;font-weight:normal;-webkit-text-stroke:.3px;font-size:14px;margin:0 1px 0 1.5px">/</span><span style="color:#0c8c50">68</span></div>
<div class="a" style="left:453px;top:197px;font-size:12px;color:#dcdce4;line-height:16px">开盘:</div>
<div class="a" style="left:487px;top:197px;font-size:11px;color:#dcdce4;line-height:16px">121.150</div>
<div class="a" style="left:453px;top:210px;font-size:12px;color:#dcdce4;line-height:16px">最高:</div>
<div class="a" style="left:487px;top:210px;font-size:11px;color:#dcdce4;line-height:16px">121.302</div>
<div class="a" style="left:453px;top:223px;font-size:12px;color:#dcdce4;line-height:16px">最低:</div>
<div class="a" style="left:487px;top:223px;font-size:11px;color:#dcdce4;line-height:16px">120.952</div>
<svg class="a" style="left:310px;top:246px" width="230" height="40" viewBox="0 0 230 40" shape-rendering="crispEdges"><rect x="6" y="4" width="13" height="2" fill="#6a6a6a"/><rect x="21" y="4" width="13" height="2" fill="#0a8a0a"/><rect x="6" y="35" width="5" height="2" fill="#0a5a0a"/><rect x="6" y="32" width="5" height="2" fill="#0c7a0c"/><rect x="6" y="29" width="5" height="2" fill="#10a010"/><rect x="6" y="26" width="5" height="2" fill="#18c018"/><rect x="6" y="23" width="5" height="2" fill="#34344a"/><rect x="6" y="20" width="5" height="2" fill="#34344a"/><rect x="6" y="17" width="5" height="2" fill="#34344a"/><rect x="6" y="14" width="5" height="2" fill="#34344a"/><rect x="6" y="11" width="5" height="2" fill="#34344a"/><rect x="13" y="35" width="5" height="2" fill="#6a0808"/><rect x="13" y="32" width="5" height="2" fill="#8c0a0a"/><rect x="13" y="29" width="5" height="2" fill="#34344a"/><rect x="13" y="26" width="5" height="2" fill="#34344a"/><rect x="13" y="23" width="5" height="2" fill="#34344a"/><rect x="13" y="20" width="5" height="2" fill="#34344a"/><rect x="13" y="17" width="5" height="2" fill="#34344a"/><rect x="13" y="14" width="5" height="2" fill="#34344a"/><rect x="13" y="11" width="5" height="2" fill="#34344a"/><rect x="21" y="35" width="5" height="2" fill="#0a5a0a"/><rect x="21" y="32" width="5" height="2" fill="#0c7a0c"/><rect x="21" y="29" width="5" height="2" fill="#34344a"/><rect x="21" y="26" width="5" height="2" fill="#34344a"/><rect x="21" y="23" width="5" height="2" fill="#34344a"/><rect x="21" y="20" width="5" height="2" fill="#34344a"/><rect x="21" y="17" width="5" height="2" fill="#34344a"/><rect x="21" y="14" width="5" height="2" fill="#34344a"/><rect x="21" y="11" width="5" height="2" fill="#34344a"/><rect x="28" y="35" width="5" height="2" fill="#6a0808"/><rect x="28" y="32" width="5" height="2" fill="#8c0a0a"/><rect x="28" y="29" width="5" height="2" fill="#34344a"/><rect x="28" y="26" width="5" height="2" fill="#34344a"/><rect x="28" y="23" width="5" height="2" fill="#34344a"/><rect x="28" y="20" width="5" height="2" fill="#34344a"/><rect x="28" y="17" width="5" height="2" fill="#34344a"/><rect x="28" y="14" width="5" height="2" fill="#34344a"/><rect x="28" y="11" width="5" height="2" fill="#34344a"/><rect x="42" y="4" width="13" height="2" fill="#0a8a0a"/><rect x="57" y="4" width="13" height="2" fill="#0a8a0a"/><rect x="42" y="35" width="5" height="2" fill="#0a5a0a"/><rect x="42" y="32" width="5" height="2" fill="#0c7a0c"/><rect x="42" y="29" width="5" height="2" fill="#10a010"/><rect x="42" y="26" width="5" height="2" fill="#18c018"/><rect x="42" y="23" width="5" height="2" fill="#22dc22"/><rect x="42" y="20" width="5" height="2" fill="#30f030"/><rect x="42" y="17" width="5" height="2" fill="#48ff48"/><rect x="42" y="14" width="5" height="2" fill="#60ff60"/><rect x="42" y="11" width="5" height="2" fill="#78ff78"/><rect x="49" y="35" width="5" height="2" fill="#0a5a0a"/><rect x="49" y="32" width="5" height="2" fill="#0c7a0c"/><rect x="49" y="29" width="5" height="2" fill="#10a010"/><rect x="49" y="26" width="5" height="2" fill="#18c018"/><rect x="49" y="23" width="5" height="2" fill="#22dc22"/><rect x="49" y="20" width="5" height="2" fill="#30f030"/><rect x="49" y="17" width="5" height="2" fill="#34344a"/><rect x="49" y="14" width="5" height="2" fill="#34344a"/><rect x="49" y="11" width="5" height="2" fill="#34344a"/><rect x="57" y="35" width="5" height="2" fill="#0a5a0a"/><rect x="57" y="32" width="5" height="2" fill="#0c7a0c"/><rect x="57" y="29" width="5" height="2" fill="#10a010"/><rect x="57" y="26" width="5" height="2" fill="#18c018"/><rect x="57" y="23" width="5" height="2" fill="#22dc22"/><rect x="57" y="20" width="5" height="2" fill="#30f030"/><rect x="57" y="17" width="5" height="2" fill="#34344a"/><rect x="57" y="14" width="5" height="2" fill="#34344a"/><rect x="57" y="11" width="5" height="2" fill="#34344a"/><rect x="64" y="35" width="5" height="2" fill="#6a0808"/><rect x="64" y="32" width="5" height="2" fill="#34344a"/><rect x="64" y="29" width="5" height="2" fill="#34344a"/><rect x="64" y="26" width="5" height="2" fill="#34344a"/><rect x="64" y="23" width="5" height="2" fill="#34344a"/><rect x="64" y="20" width="5" height="2" fill="#34344a"/><rect x="64" y="17" width="5" height="2" fill="#34344a"/><rect x="64" y="14" width="5" height="2" fill="#34344a"/><rect x="64" y="11" width="5" height="2" fill="#34344a"/><rect x="78" y="4" width="13" height="2" fill="#0a8a0a"/><rect x="93" y="4" width="13" height="2" fill="#0a8a0a"/><rect x="78" y="35" width="5" height="2" fill="#0a5a0a"/><rect x="78" y="32" width="5" height="2" fill="#0c7a0c"/><rect x="78" y="29" width="5" height="2" fill="#10a010"/><rect x="78" y="26" width="5" height="2" fill="#18c018"/><rect x="78" y="23" width="5" height="2" fill="#22dc22"/><rect x="78" y="20" width="5" height="2" fill="#30f030"/><rect x="78" y="17" width="5" height="2" fill="#48ff48"/><rect x="78" y="14" width="5" height="2" fill="#34344a"/><rect x="78" y="11" width="5" height="2" fill="#34344a"/><rect x="85" y="35" width="5" height="2" fill="#0a5a0a"/><rect x="85" y="32" width="5" height="2" fill="#0c7a0c"/><rect x="85" y="29" width="5" height="2" fill="#10a010"/><rect x="85" y="26" width="5" height="2" fill="#18c018"/><rect x="85" y="23" width="5" height="2" fill="#22dc22"/><rect x="85" y="20" width="5" height="2" fill="#30f030"/><rect x="85" y="17" width="5" height="2" fill="#48ff48"/><rect x="85" y="14" width="5" height="2" fill="#60ff60"/><rect x="85" y="11" width="5" height="2" fill="#34344a"/><rect x="93" y="35" width="5" height="2" fill="#0a5a0a"/><rect x="93" y="32" width="5" height="2" fill="#0c7a0c"/><rect x="93" y="29" width="5" height="2" fill="#10a010"/><rect x="93" y="26" width="5" height="2" fill="#18c018"/><rect x="93" y="23" width="5" height="2" fill="#22dc22"/><rect x="93" y="20" width="5" height="2" fill="#30f030"/><rect x="93" y="17" width="5" height="2" fill="#48ff48"/><rect x="93" y="14" width="5" height="2" fill="#60ff60"/><rect x="93" y="11" width="5" height="2" fill="#78ff78"/><rect x="100" y="35" width="5" height="2" fill="#6a0808"/><rect x="100" y="32" width="5" height="2" fill="#34344a"/><rect x="100" y="29" width="5" height="2" fill="#34344a"/><rect x="100" y="26" width="5" height="2" fill="#34344a"/><rect x="100" y="23" width="5" height="2" fill="#34344a"/><rect x="100" y="20" width="5" height="2" fill="#34344a"/><rect x="100" y="17" width="5" height="2" fill="#34344a"/><rect x="100" y="14" width="5" height="2" fill="#34344a"/><rect x="100" y="11" width="5" height="2" fill="#34344a"/><rect x="114" y="4" width="13" height="2" fill="#0a8a0a"/><rect x="129" y="4" width="13" height="2" fill="#0a8a0a"/><rect x="114" y="35" width="5" height="2" fill="#0a5a0a"/><rect x="114" y="32" width="5" height="2" fill="#0c7a0c"/><rect x="114" y="29" width="5" height="2" fill="#10a010"/><rect x="114" y="26" width="5" height="2" fill="#18c018"/><rect x="114" y="23" width="5" height="2" fill="#22dc22"/><rect x="114" y="20" width="5" height="2" fill="#30f030"/><rect x="114" y="17" width="5" height="2" fill="#34344a"/><rect x="114" y="14" width="5" height="2" fill="#34344a"/><rect x="114" y="11" width="5" height="2" fill="#34344a"/><rect x="121" y="35" width="5" height="2" fill="#0a5a0a"/><rect x="121" y="32" width="5" height="2" fill="#34344a"/><rect x="121" y="29" width="5" height="2" fill="#34344a"/><rect x="121" y="26" width="5" height="2" fill="#34344a"/><rect x="121" y="23" width="5" height="2" fill="#34344a"/><rect x="121" y="20" width="5" height="2" fill="#34344a"/><rect x="121" y="17" width="5" height="2" fill="#34344a"/><rect x="121" y="14" width="5" height="2" fill="#34344a"/><rect x="121" y="11" width="5" height="2" fill="#34344a"/><rect x="129" y="35" width="5" height="2" fill="#0a5a0a"/><rect x="129" y="32" width="5" height="2" fill="#0c7a0c"/><rect x="129" y="29" width="5" height="2" fill="#10a010"/><rect x="129" y="26" width="5" height="2" fill="#18c018"/><rect x="129" y="23" width="5" height="2" fill="#22dc22"/><rect x="129" y="20" width="5" height="2" fill="#30f030"/><rect x="129" y="17" width="5" height="2" fill="#48ff48"/><rect x="129" y="14" width="5" height="2" fill="#60ff60"/><rect x="129" y="11" width="5" height="2" fill="#78ff78"/><rect x="136" y="35" width="5" height="2" fill="#6a0808"/><rect x="136" y="32" width="5" height="2" fill="#8c0a0a"/><rect x="136" y="29" width="5" height="2" fill="#b01010"/><rect x="136" y="26" width="5" height="2" fill="#34344a"/><rect x="136" y="23" width="5" height="2" fill="#34344a"/><rect x="136" y="20" width="5" height="2" fill="#34344a"/><rect x="136" y="17" width="5" height="2" fill="#34344a"/><rect x="136" y="14" width="5" height="2" fill="#34344a"/><rect x="136" y="11" width="5" height="2" fill="#34344a"/><rect x="150" y="4" width="13" height="2" fill="#0a8a0a"/><rect x="165" y="4" width="13" height="2" fill="#0a8a0a"/><rect x="150" y="35" width="5" height="2" fill="#0a5a0a"/><rect x="150" y="32" width="5" height="2" fill="#0c7a0c"/><rect x="150" y="29" width="5" height="2" fill="#10a010"/><rect x="150" y="26" width="5" height="2" fill="#18c018"/><rect x="150" y="23" width="5" height="2" fill="#22dc22"/><rect x="150" y="20" width="5" height="2" fill="#34344a"/><rect x="150" y="17" width="5" height="2" fill="#34344a"/><rect x="150" y="14" width="5" height="2" fill="#34344a"/><rect x="150" y="11" width="5" height="2" fill="#34344a"/><rect x="157" y="35" width="5" height="2" fill="#0a5a0a"/><rect x="157" y="32" width="5" height="2" fill="#0c7a0c"/><rect x="157" y="29" width="5" height="2" fill="#34344a"/><rect x="157" y="26" width="5" height="2" fill="#34344a"/><rect x="157" y="23" width="5" height="2" fill="#34344a"/><rect x="157" y="20" width="5" height="2" fill="#34344a"/><rect x="157" y="17" width="5" height="2" fill="#34344a"/><rect x="157" y="14" width="5" height="2" fill="#34344a"/><rect x="157" y="11" width="5" height="2" fill="#34344a"/><rect x="165" y="35" width="5" height="2" fill="#0a5a0a"/><rect x="165" y="32" width="5" height="2" fill="#0c7a0c"/><rect x="165" y="29" width="5" height="2" fill="#10a010"/><rect x="165" y="26" width="5" height="2" fill="#18c018"/><rect x="165" y="23" width="5" height="2" fill="#22dc22"/><rect x="165" y="20" width="5" height="2" fill="#34344a"/><rect x="165" y="17" width="5" height="2" fill="#34344a"/><rect x="165" y="14" width="5" height="2" fill="#34344a"/><rect x="165" y="11" width="5" height="2" fill="#34344a"/><rect x="172" y="35" width="5" height="2" fill="#6a0808"/><rect x="172" y="32" width="5" height="2" fill="#8c0a0a"/><rect x="172" y="29" width="5" height="2" fill="#b01010"/><rect x="172" y="26" width="5" height="2" fill="#d01414"/><rect x="172" y="23" width="5" height="2" fill="#34344a"/><rect x="172" y="20" width="5" height="2" fill="#34344a"/><rect x="172" y="17" width="5" height="2" fill="#34344a"/><rect x="172" y="14" width="5" height="2" fill="#34344a"/><rect x="172" y="11" width="5" height="2" fill="#34344a"/><rect x="186" y="4" width="13" height="2" fill="#0a8a0a"/><rect x="201" y="4" width="13" height="2" fill="#0a8a0a"/><rect x="186" y="35" width="5" height="2" fill="#0a5a0a"/><rect x="186" y="32" width="5" height="2" fill="#0c7a0c"/><rect x="186" y="29" width="5" height="2" fill="#10a010"/><rect x="186" y="26" width="5" height="2" fill="#18c018"/><rect x="186" y="23" width="5" height="2" fill="#22dc22"/><rect x="186" y="20" width="5" height="2" fill="#34344a"/><rect x="186" y="17" width="5" height="2" fill="#34344a"/><rect x="186" y="14" width="5" height="2" fill="#34344a"/><rect x="186" y="11" width="5" height="2" fill="#34344a"/><rect x="193" y="35" width="5" height="2" fill="#0a5a0a"/><rect x="193" y="32" width="5" height="2" fill="#0c7a0c"/><rect x="193" y="29" width="5" height="2" fill="#10a010"/><rect x="193" y="26" width="5" height="2" fill="#18c018"/><rect x="193" y="23" width="5" height="2" fill="#22dc22"/><rect x="193" y="20" width="5" height="2" fill="#30f030"/><rect x="193" y="17" width="5" height="2" fill="#48ff48"/><rect x="193" y="14" width="5" height="2" fill="#34344a"/><rect x="193" y="11" width="5" height="2" fill="#34344a"/><rect x="201" y="35" width="5" height="2" fill="#0a5a0a"/><rect x="201" y="32" width="5" height="2" fill="#0c7a0c"/><rect x="201" y="29" width="5" height="2" fill="#10a010"/><rect x="201" y="26" width="5" height="2" fill="#18c018"/><rect x="201" y="23" width="5" height="2" fill="#34344a"/><rect x="201" y="20" width="5" height="2" fill="#34344a"/><rect x="201" y="17" width="5" height="2" fill="#34344a"/><rect x="201" y="14" width="5" height="2" fill="#34344a"/><rect x="201" y="11" width="5" height="2" fill="#34344a"/><rect x="208" y="35" width="5" height="2" fill="#6a0808"/><rect x="208" y="32" width="5" height="2" fill="#8c0a0a"/><rect x="208" y="29" width="5" height="2" fill="#34344a"/><rect x="208" y="26" width="5" height="2" fill="#34344a"/><rect x="208" y="23" width="5" height="2" fill="#34344a"/><rect x="208" y="20" width="5" height="2" fill="#34344a"/><rect x="208" y="17" width="5" height="2" fill="#34344a"/><rect x="208" y="14" width="5" height="2" fill="#34344a"/><rect x="208" y="11" width="5" height="2" fill="#34344a"/></svg>
<div class="a" style="left:320px;top:285px;font-size:12px;color:#6a6a6a;line-height:16px">M1</div>
<div class="a" style="left:356px;top:285px;font-size:12px;color:#138a13;line-height:16px">M5</div>
<div class="a" style="left:391px;top:285px;font-size:12px;color:#138a13;line-height:16px">M15</div>
<div class="a" style="left:427px;top:285px;font-size:12px;color:#138a13;line-height:16px">M30</div>
<div class="a" style="left:464px;top:285px;font-size:12px;color:#138a13;line-height:16px">H1</div>
<div class="a" style="left:500px;top:285px;font-size:12px;color:#138a13;line-height:16px">H4</div>
<div class="a" style="left:318px;top:340px;width:1px;height:118px;background:#34344a"></div>
<div class="a" style="left:524px;top:340px;width:1px;height:118px;background:#34344a"></div>
<div class="a c" style="left:328px;top:340px;width:80px;font-size:9px;color:#b4b4c0;line-height:12px">回报</div>
<div class="a c" style="left:318px;top:351px;width:100px;font-size:16px;color:#f01818;line-height:20px">-44.54</div>
<div class="a c" style="left:328px;top:370px;width:80px;font-size:9px;color:#b4b4c0;line-height:12px">入金</div>
<div class="a c" style="left:318px;top:381px;width:100px;font-size:16px;color:#fff;line-height:20px">1000.00</div>
<div class="a c" style="left:328px;top:400px;width:80px;font-size:9px;color:#b4b4c0;line-height:12px">出金</div>
<div class="a c" style="left:318px;top:411px;width:100px;font-size:16px;color:#fff;line-height:20px">-500.00</div>
<div class="a c" style="left:328px;top:430px;width:80px;font-size:9px;color:#b4b4c0;line-height:12px">余额</div>
<div class="a c" style="left:318px;top:441px;width:100px;font-size:16px;color:#fff;line-height:20px">1455.46</div>
<div class="a c" style="left:421px;top:340px;width:100px;font-size:9px;color:#b4b4c0;line-height:12px">交易笔数</div>
<div class="a c" style="left:421px;top:351px;width:100px;font-size:16px;color:#fff;line-height:20px">75.00</div>
<div class="a c" style="left:421px;top:370px;width:100px;font-size:9px;color:#b4b4c0;line-height:12px">帐户类型</div>
<div class="a c" style="left:421px;top:381px;width:100px;font-size:16px;color:#fff;line-height:20px"><span style="font-size:13px;font-weight:500;position:relative;top:-1.5px">真实</span></div>
<div class="a c" style="left:421px;top:400px;width:100px;font-size:9px;color:#b4b4c0;line-height:12px">交易时间</div>
<div class="a c" style="left:421px;top:411px;width:100px;font-size:16px;color:#fff;line-height:20px">71 <span style="font-size:13px;position:relative;top:-1.5px">天</span></div>
<div class="a c" style="left:421px;top:430px;width:100px;font-size:9px;color:#b4b4c0;line-height:12px">预期年回报率</div>
<div class="a c" style="left:421px;top:441px;width:100px;font-size:16px;color:#fff;line-height:20px">-22.90 %</div>
<div class="a" style="left:314px;top:503px;font-size:12px;color:#d8d8e0;line-height:16px;word-spacing:1.5px;font-family:'Liberation Serif','Noto Serif CJK SC',serif;font-weight:500">盈 亏</div>
<div class="a" style="left:346px;top:504px;width:135px;height:14px;background:#14141e;border:1px solid #3c3c54"></div>
<div class="a" style="left:496px;top:503px;font-size:10.2px;color:#e4e4ec;line-height:16px;font-family:'Liberation Mono',monospace;letter-spacing:-.1px">0.00%</div>
<div class="a" style="left:314px;top:527px;font-size:12px;color:#d8d8e0;line-height:16px;word-spacing:1.5px;font-family:'Liberation Serif','Noto Serif CJK SC',serif;font-weight:500">仓 位</div>
<div class="a" style="left:346px;top:528px;width:135px;height:14px;background:#14141e;border:1px solid #3c3c54"></div>
<div class="a" style="left:496px;top:527px;font-size:10.2px;color:#e4e4ec;line-height:16px;font-family:'Liberation Mono',monospace;letter-spacing:-.1px">0.00%</div>
<div class="a" style="left:297px;top:566px;width:1098px;height:15px;overflow:hidden"><div class="a" style="left:19px;top:0px;font-size:13.5px;color:#56566c;line-height:18px">https://daoyi-sj.gitee.io</div><div class="a" style="left:171px;top:0px;font-size:13px;color:#56566c;line-height:18px">|</div><div class="a" style="left:193px;top:0px;font-size:13.5px;color:#56566c;line-height:18px">交流QQ群: <span style="font-size:12.4px">876229441</span></div><div class="a" style="left:369px;top:1px;font-size:12px;color:#f0f000;line-height:16px">本套系统源码出售，有意者请加微信 daoyilh</div></div>
<svg class="a" style="left:1367px;top:568px" width="14" height="13" viewBox="0 0 14 13"><path d="M5.500 8.500L9 4.500M6.500 4.200L8.300 2.400a2.200 2.200 0 0 1 3.200 3.200L9.700 7.400M7.500 8.800L5.700 10.600a2.200 2.200 0 0 1-3.200-3.200L4.300 5.600" fill="none" stroke="#0c9a50" stroke-width="1.5"/></svg>
<svg class="a" style="left:571px;top:373px" width="780" height="30" viewBox="0 0 780 30"><text x="45.5" y="15.5" font-size="11" fill="#b4c0d6" font-family="Liberation Sans,sans-serif" transform="rotate(-45 45.5 15.5)">01.1</text><text x="62.0" y="15.5" font-size="11" fill="#b4c0d6" font-family="Liberation Sans,sans-serif" transform="rotate(-45 62.0 15.5)">01.1</text><text x="78.6" y="15.5" font-size="11" fill="#b4c0d6" font-family="Liberation Sans,sans-serif" transform="rotate(-45 78.6 15.5)">01.1</text><text x="95.1" y="15.5" font-size="11" fill="#b4c0d6" font-family="Liberation Sans,sans-serif" transform="rotate(-45 95.1 15.5)">01.1</text><text x="111.7" y="15.5" font-size="11" fill="#b4c0d6" font-family="Liberation Sans,sans-serif" transform="rotate(-45 111.7 15.5)">01.1</text><text x="128.2" y="15.5" font-size="11" fill="#b4c0d6" font-family="Liberation Sans,sans-serif" transform="rotate(-45 128.2 15.5)">01.2</text><text x="144.7" y="15.5" font-size="11" fill="#b4c0d6" font-family="Liberation Sans,sans-serif" transform="rotate(-45 144.7 15.5)">01.2</text><text x="161.3" y="15.5" font-size="11" fill="#b4c0d6" font-family="Liberation Sans,sans-serif" transform="rotate(-45 161.3 15.5)">01.2</text><text x="177.8" y="15.5" font-size="11" fill="#b4c0d6" font-family="Liberation Sans,sans-serif" transform="rotate(-45 177.8 15.5)">01.2</text><text x="194.4" y="15.5" font-size="11" fill="#b4c0d6" font-family="Liberation Sans,sans-serif" transform="rotate(-45 194.4 15.5)">01.2</text><text x="210.9" y="15.5" font-size="11" fill="#b4c0d6" font-family="Liberation Sans,sans-serif" transform="rotate(-45 210.9 15.5)">01.2</text><text x="227.4" y="15.5" font-size="11" fill="#b4c0d6" font-family="Liberation Sans,sans-serif" transform="rotate(-45 227.4 15.5)">02.0</text><text x="244.0" y="15.5" font-size="11" fill="#b4c0d6" font-family="Liberation Sans,sans-serif" transform="rotate(-45 244.0 15.5)">02.0</text><text x="260.5" y="15.5" font-size="11" fill="#b4c0d6" font-family="Liberation Sans,sans-serif" transform="rotate(-45 260.5 15.5)">02.0</text><text x="277.1" y="15.5" font-size="11" fill="#b4c0d6" font-family="Liberation Sans,sans-serif" transform="rotate(-45 277.1 15.5)">02.0</text><text x="293.6" y="15.5" font-size="11" fill="#b4c0d6" font-family="Liberation Sans,sans-serif" transform="rotate(-45 293.6 15.5)">02.0</text><text x="310.1" y="15.5" font-size="11" fill="#b4c0d6" font-family="Liberation Sans,sans-serif" transform="rotate(-45 310.1 15.5)">02.0</text><text x="326.7" y="15.5" font-size="11" fill="#b4c0d6" font-family="Liberation Sans,sans-serif" transform="rotate(-45 326.7 15.5)">02.1</text><text x="343.2" y="15.5" font-size="11" fill="#b4c0d6" font-family="Liberation Sans,sans-serif" transform="rotate(-45 343.2 15.5)">02.1</text><text x="359.8" y="15.5" font-size="11" fill="#b4c0d6" font-family="Liberation Sans,sans-serif" transform="rotate(-45 359.8 15.5)">02.1</text><text x="376.3" y="15.5" font-size="11" fill="#b4c0d6" font-family="Liberation Sans,sans-serif" transform="rotate(-45 376.3 15.5)">02.1</text><text x="392.8" y="15.5" font-size="11" fill="#b4c0d6" font-family="Liberation Sans,sans-serif" transform="rotate(-45 392.8 15.5)">02.2</text><text x="409.4" y="15.5" font-size="11" fill="#b4c0d6" font-family="Liberation Sans,sans-serif" transform="rotate(-45 409.4 15.5)">02.2</text><text x="425.9" y="15.5" font-size="11" fill="#b4c0d6" font-family="Liberation Sans,sans-serif" transform="rotate(-45 425.9 15.5)">02.2</text><text x="442.5" y="15.5" font-size="11" fill="#b4c0d6" font-family="Liberation Sans,sans-serif" transform="rotate(-45 442.5 15.5)">02.2</text><text x="459.0" y="15.5" font-size="11" fill="#b4c0d6" font-family="Liberation Sans,sans-serif" transform="rotate(-45 459.0 15.5)">02.2</text><text x="475.5" y="15.5" font-size="11" fill="#b4c0d6" font-family="Liberation Sans,sans-serif" transform="rotate(-45 475.5 15.5)">03.0</text><text x="492.1" y="15.5" font-size="11" fill="#b4c0d6" font-family="Liberation Sans,sans-serif" transform="rotate(-45 492.1 15.5)">03.0</text><text x="508.6" y="15.5" font-size="11" fill="#b4c0d6" font-family="Liberation Sans,sans-serif" transform="rotate(-45 508.6 15.5)">03.0</text><text x="525.2" y="15.5" font-size="11" fill="#b4c0d6" font-family="Liberation Sans,sans-serif" transform="rotate(-45 525.2 15.5)">03.0</text><text x="541.7" y="15.5" font-size="11" fill="#b4c0d6" font-family="Liberation Sans,sans-serif" transform="rotate(-45 541.7 15.5)">03.0</text><text x="558.2" y="15.5" font-size="11" fill="#b4c0d6" font-family="Liberation Sans,sans-serif" transform="rotate(-45 558.2 15.5)">03.0</text><text x="574.8" y="15.5" font-size="11" fill="#b4c0d6" font-family="Liberation Sans,sans-serif" transform="rotate(-45 574.8 15.5)">03.1</text><text x="591.3" y="15.5" font-size="11" fill="#b4c0d6" font-family="Liberation Sans,sans-serif" transform="rotate(-45 591.3 15.5)">03.1</text><text x="607.9" y="15.5" font-size="11" fill="#b4c0d6" font-family="Liberation Sans,sans-serif" transform="rotate(-45 607.9 15.5)">03.1</text><text x="624.4" y="15.5" font-size="11" fill="#b4c0d6" font-family="Liberation Sans,sans-serif" transform="rotate(-45 624.4 15.5)">03.1</text><text x="640.9" y="15.5" font-size="11" fill="#b4c0d6" font-family="Liberation Sans,sans-serif" transform="rotate(-45 640.9 15.5)">03.1</text><text x="657.5" y="15.5" font-size="11" fill="#b4c0d6" font-family="Liberation Sans,sans-serif" transform="rotate(-45 657.5 15.5)">03.1</text><text x="674.0" y="15.5" font-size="11" fill="#b4c0d6" font-family="Liberation Sans,sans-serif" transform="rotate(-45 674.0 15.5)">03.2</text><text x="690.6" y="15.5" font-size="11" fill="#b4c0d6" font-family="Liberation Sans,sans-serif" transform="rotate(-45 690.6 15.5)">03.2</text><text x="707.1" y="15.5" font-size="11" fill="#b4c0d6" font-family="Liberation Sans,sans-serif" transform="rotate(-45 707.1 15.5)">03.2</text><text x="723.6" y="15.5" font-size="11" fill="#b4c0d6" font-family="Liberation Sans,sans-serif" transform="rotate(-45 723.6 15.5)">03.2</text></svg>
<div class="a" style="left:580px;top:409px;width:773px;height:132px;background:#1f1f2d"></div>
<div class="a" style="left:589px;top:421px;width:1px;height:108px;background:#34344a"></div>
<div class="a lbl" style="left:599px;top:420px;line-height:16px">净收益</div>
<div class="a val" style="left:654px;top:419px;line-height:18px">955.46</div>
<div class="a lbl" style="left:599px;top:443px;line-height:16px">总盈利</div>
<div class="a val" style="left:654px;top:442px;line-height:18px">1913.18</div>
<div class="a lbl" style="left:599px;top:466px;line-height:16px">总亏损</div>
<div class="a val" style="left:654px;top:465px;line-height:18px">-957.72</div>
<div class="a lbl" style="left:599px;top:489px;line-height:16px">入金</div>
<div class="a val" style="left:654px;top:488px;line-height:18px">1000.00</div>
<div class="a lbl" style="left:599px;top:512px;line-height:16px">出金</div>
<div class="a val" style="left:654px;top:511px;line-height:18px">-500.00</div>
<div class="a" style="left:739px;top:421px;width:1px;height:108px;background:#34344a"></div>
<div class="a lbl" style="left:749px;top:420px;line-height:16px">总交易手数</div>
<div class="a val" style="left:814px;top:419px;line-height:18px">8.30</div>
<div class="a lbl" style="left:749px;top:443px;line-height:16px">多单手数</div>
<div class="a val" style="left:814px;top:442px;line-height:18px">7.60</div>
<div class="a lbl" style="left:749px;top:466px;line-height:16px">空单手数</div>
<div class="a val" style="left:814px;top:465px;line-height:18px">0.70</div>
<div class="a lbl" style="left:749px;top:489px;line-height:16px">盈利单手数</div>
<div class="a val" style="left:814px;top:488px;line-height:18px">6.00</div>
<div class="a lbl" style="left:749px;top:512px;line-height:16px">亏损单手数</div>
<div class="a val" style="left:814px;top:511px;line-height:18px">2.30</div>
<div class="a" style="left:889px;top:421px;width:1px;height:108px;background:#34344a"></div>
<div class="a lbl" style="left:899px;top:420px;line-height:16px">总交易笔数</div>
<div class="a val" style="left:964px;top:419px;line-height:18px">75</div>
<div class="a lbl" style="left:899px;top:443px;line-height:16px">多单笔数</div>
<div class="a val" style="left:964px;top:442px;line-height:18px">68</div>
<div class="a lbl" style="left:899px;top:466px;line-height:16px">空单笔数</div>
<div class="a val" style="left:964px;top:465px;line-height:18px">7</div>
<div class="a lbl" style="left:899px;top:489px;line-height:16px">盈利单笔数</div>
<div class="a val" style="left:964px;top:488px;line-height:18px">55</div>
<div class="a lbl" style="left:899px;top:512px;line-height:16px">亏损单笔数</div>
<div class="a val" style="left:964px;top:511px;line-height:18px">20</div>
<div class="a" style="left:1039px;top:421px;width:1px;height:108px;background:#34344a"></div>
<div class="a lbl" style="left:1049px;top:420px;line-height:16px">最大亏损点数</div>
<div class="a val" style="left:1124px;top:419px;line-height:18px">-1206</div>
<div class="a lbl" style="left:1049px;top:443px;line-height:16px">最大亏损金额</div>
<div class="a val" style="left:1124px;top:442px;line-height:18px">-144.50</div>
<div class="a lbl" style="left:1049px;top:466px;line-height:16px">最大盈利点数</div>
<div class="a val" style="left:1124px;top:465px;line-height:18px">1440</div>
<div class="a lbl" style="left:1049px;top:489px;line-height:16px">最大盈利金额</div>
<div class="a val" style="left:1124px;top:488px;line-height:18px">138.40</div>
<div class="a lbl" style="left:1049px;top:512px;line-height:16px">总盈亏比</div>
<div class="a val" style="left:1124px;top:511px;line-height:18px">2.00</div>
<div class="a" style="left:1189px;top:421px;width:1px;height:108px;background:#34344a"></div>
<div class="a lbl" style="left:1199px;top:420px;line-height:16px">平均日收益</div>
<div class="a val" style="left:1274px;top:419px;line-height:18px">22.75</div>
<div class="a lbl" style="left:1199px;top:443px;line-height:16px">平均周收益</div>
<div class="a val" style="left:1274px;top:442px;line-height:18px">95.55</div>
<div class="a lbl" style="left:1199px;top:466px;line-height:16px">平均月收益</div>
<div class="a val" style="left:1274px;top:465px;line-height:18px">318.49</div>
<div class="a lbl" style="left:1199px;top:489px;line-height:16px">平均持仓时间</div>
<div class="a val" style="left:1274px;top:488px;line-height:18px">5.23小时</div>
<div class="a" style="left:276px;top:581px;width:1596px;height:20px;background:#000"></div>
<div class="a" style="left:275px;top:580px;width:1597px;height:1px;background:#fff"></div>
<div class="a" style="left:276px;top:581px;width:1px;height:3px;background:#fff"></div>
<div class="a" style="left:275px;top:583px;font-size:10px;color:#fff;line-height:14px;letter-spacing:-.4px">8 Mar 2022</div>
<div class="a" style="left:340px;top:581px;width:1px;height:3px;background:#fff"></div>
<div class="a" style="left:339px;top:583px;font-size:10px;color:#fff;line-height:14px;letter-spacing:-.4px">8 Mar 16:50</div>
<div class="a" style="left:404px;top:581px;width:1px;height:3px;background:#fff"></div>
<div class="a" style="left:403px;top:583px;font-size:10px;color:#fff;line-height:14px;letter-spacing:-.4px">8 Mar 22:10</div>
<div class="a" style="left:468px;top:581px;width:1px;height:3px;background:#fff"></div>
<div class="a" style="left:467px;top:583px;font-size:10px;color:#fff;line-height:14px;letter-spacing:-.4px">9 Mar 03:35</div>
<div class="a" style="left:532px;top:581px;width:1px;height:3px;background:#fff"></div>
<div class="a" style="left:531px;top:583px;font-size:10px;color:#fff;line-height:14px;letter-spacing:-.4px">9 Mar 08:55</div>
<div class="a" style="left:596px;top:581px;width:1px;height:3px;background:#fff"></div>
<div class="a" style="left:595px;top:583px;font-size:10px;color:#fff;line-height:14px;letter-spacing:-.4px">9 Mar 14:15</div>
<div class="a" style="left:660px;top:581px;width:1px;height:3px;background:#fff"></div>
<div class="a" style="left:659px;top:583px;font-size:10px;color:#fff;line-height:14px;letter-spacing:-.4px">9 Mar 19:35</div>
<div class="a" style="left:724px;top:581px;width:1px;height:3px;background:#fff"></div>
<div class="a" style="left:723px;top:583px;font-size:10px;color:#fff;line-height:14px;letter-spacing:-.4px">10 Mar 00:55</div>
<div class="a" style="left:788px;top:581px;width:1px;height:3px;background:#fff"></div>
<div class="a" style="left:787px;top:583px;font-size:10px;color:#fff;line-height:14px;letter-spacing:-.4px">10 Mar 06:15</div>
<div class="a" style="left:852px;top:581px;width:1px;height:3px;background:#fff"></div>
<div class="a" style="left:851px;top:583px;font-size:10px;color:#fff;line-height:14px;letter-spacing:-.4px">10 Mar 11:35</div>
<div class="a" style="left:916px;top:581px;width:1px;height:3px;background:#fff"></div>
<div class="a" style="left:915px;top:583px;font-size:10px;color:#fff;line-height:14px;letter-spacing:-.4px">10 Mar 16:55</div>
<div class="a" style="left:980px;top:581px;width:1px;height:3px;background:#fff"></div>
<div class="a" style="left:979px;top:583px;font-size:10px;color:#fff;line-height:14px;letter-spacing:-.4px">10 Mar 22:20</div>
<div class="a" style="left:1044px;top:581px;width:1px;height:3px;background:#fff"></div>
<div class="a" style="left:1043px;top:583px;font-size:10px;color:#fff;line-height:14px;letter-spacing:-.4px">11 Mar 03:40</div>
<div class="a" style="left:1108px;top:581px;width:1px;height:3px;background:#fff"></div>
<div class="a" style="left:1107px;top:583px;font-size:10px;color:#fff;line-height:14px;letter-spacing:-.4px">11 Mar 09:00</div>
<div class="a" style="left:1172px;top:581px;width:1px;height:3px;background:#fff"></div>
<div class="a" style="left:1171px;top:583px;font-size:10px;color:#fff;line-height:14px;letter-spacing:-.4px">11 Mar 14:20</div>
<div class="a" style="left:1236px;top:581px;width:1px;height:3px;background:#fff"></div>
<div class="a" style="left:1235px;top:583px;font-size:10px;color:#fff;line-height:14px;letter-spacing:-.4px">11 Mar 19:40</div>
<div class="a" style="left:1300px;top:581px;width:1px;height:3px;background:#fff"></div>
<div class="a" style="left:1299px;top:583px;font-size:10px;color:#fff;line-height:14px;letter-spacing:-.4px">14 Mar 01:00</div>
<div class="a" style="left:1364px;top:581px;width:1px;height:3px;background:#fff"></div>
<div class="a" style="left:1363px;top:583px;font-size:10px;color:#fff;line-height:14px;letter-spacing:-.4px">14 Mar 06:20</div>
<div class="a" style="left:1428px;top:581px;width:1px;height:3px;background:#fff"></div>
<div class="a" style="left:1427px;top:583px;font-size:10px;color:#fff;line-height:14px;letter-spacing:-.4px">14 Mar 11:40</div>
<div class="a" style="left:1492px;top:581px;width:1px;height:3px;background:#fff"></div>
<div class="a" style="left:1491px;top:583px;font-size:10px;color:#fff;line-height:14px;letter-spacing:-.4px">14 Mar 17:00</div>
<div class="a" style="left:1556px;top:581px;width:1px;height:3px;background:#fff"></div>
<div class="a" style="left:1555px;top:583px;font-size:10px;color:#fff;line-height:14px;letter-spacing:-.4px">14 Mar 22:20</div>
<div class="a" style="left:1620px;top:581px;width:1px;height:3px;background:#fff"></div>
<div class="a" style="left:1619px;top:583px;font-size:10px;color:#fff;line-height:14px;letter-spacing:-.4px">15 Mar 03:40</div>
<div class="a" style="left:1684px;top:581px;width:1px;height:3px;background:#fff"></div>
<div class="a" style="left:1683px;top:583px;font-size:10px;color:#fff;line-height:14px;letter-spacing:-.4px">15 Mar 09:00</div>
<div class="a" style="left:1748px;top:581px;width:1px;height:3px;background:#fff"></div>
<div class="a" style="left:1747px;top:583px;font-size:10px;color:#fff;line-height:14px;letter-spacing:-.4px">15 Mar 14:20</div>
<div class="a" style="left:1812px;top:581px;width:1px;height:3px;background:#fff"></div>
<div class="a" style="left:1811px;top:583px;font-size:10px;color:#fff;line-height:14px;letter-spacing:-.4px">15 Mar 19:40</div>
<div class="a" style="left:571px;top:5px;width:1011px;height:368px;background:#252b33;border:1px solid #7a8aa0;border-top-color:#3a4250"></div>
<div class="a" style="left:572px;top:6px;width:1009px;height:39px;background:#1b1b1b"></div>
<div class="a" style="left:576px;top:5.500px;font-size:11px;color:#f0f000;line-height:16px">MTDriver统计 ,V3.25</div>
<div class="a r" style="left:1440px;top:6px;width:138px;font-size:10.7px;color:#a8c8ee;line-height:16px">http://mtdriver.cn</div>
<div class="a" style="left:588px;top:28px;font-size:13px;color:#585858;line-height:16px">综</div>
<div class="a c" style="left:611px;top:22px;width:163px;height:26px;background:#04070a;border:1px solid #11161c;border-radius:3.500px;font-size:13.3px;color:#f0f000;line-height:27px">迈汇数据 - 推送家</div>
<div class="a c" style="left:781px;top:22px;width:163px;height:26px;background:#04070a;border:1px solid #11161c;border-radius:3.500px;font-size:13px;color:#10e010;line-height:27px">扫描交易信号机器人</div>
<div class="a" style="left:774px;top:35px;width:2px;height:1px;background:#404040"></div>
<svg class="a" style="left:571px;top:5px" width="1011" height="160" viewBox="571 5 1011 160"><path d="M584.500 47V144.500H1569" fill="none" stroke="#9098a4" stroke-width="1"/><polyline fill="none" stroke="#00bcff" stroke-width="2" stroke-linejoin="round" shape-rendering="crispEdges" points="585,63 667,133.5 745.5,142 770,143.2 812,144 832,143.6 1072,113.4 1090,114.7 1150,116.8 1192,115.3 1240,113.6 1322,81.4 1405,73.4 1486,48.4 1530,47.8 1570,47.3"/><path d="M1547 5H1556.500L1551.700 9.500Z" fill="#8a9ab4"/><path d="M1577 45.700L1581.500 41.800V49.600Z" fill="#c4c4cc"/></svg>
<div class="a" style="left:627px;top:146px;font-size:8.5px;color:#9aa0a8;line-height:12px;letter-spacing:0">2021.12.13</div>
<div class="a r" style="left:1500px;top:146px;width:68px;font-size:8.5px;color:#9aa0a8;line-height:12px;letter-spacing:0">2022.03.21</div>
<div class="a" style="left:648px;top:61px;font-size:27.4px;color:#f83838;line-height:38px;white-space:pre">顺势策略#   实盘131%，纯EA技术</div>
<div class="a" style="left:1351px;top:106px;font-size:22.1px;color:#f83838;line-height:30px">详询VX/QQ750980874</div>
<div class="a" style="left:577px;top:161px;font-size:11.8px;color:#d4d4d8;line-height:16px">周</div>
<div class="a" style="left:737px;top:161px;font-size:11.8px;color:#d4d4d8;line-height:16px">手数</div>
<div class="a" style="left:797px;top:161px;font-size:11.8px;color:#d4d4d8;line-height:16px">最大手数</div>
<div class="a" style="left:856px;top:161px;font-size:11.8px;color:#d4d4d8;line-height:16px">次数</div>
<div class="a" style="left:917px;top:161px;font-size:11.8px;color:#d4d4d8;line-height:16px">盈亏金额</div>
<div class="a" style="left:997px;top:161px;font-size:11.8px;color:#d4d4d8;line-height:16px">百分比%</div>
<div class="a" style="left:1066px;top:161px;font-size:11.8px;color:#d4d4d8;line-height:16px">出入金</div>
<div class="a" style="left:1137px;top:161px;font-size:11.8px;color:#d4d4d8;line-height:16px">余额</div>
<div class="a" style="left:1227px;top:161px;font-size:11.8px;color:#d4d4d8;line-height:16px">最大浮亏</div>
<div class="a" style="left:1317px;top:161px;font-size:11.8px;color:#d4d4d8;line-height:16px">最大浮亏比例</div>
<div class="a" style="left:1397px;top:161px;font-size:11.8px;color:#d4d4d8;line-height:16px">最大浮盈金额</div>
<div class="a" style="left:1487px;top:161px;font-size:11.8px;color:#d4d4d8;line-height:16px">最大浮盈比例</div>
<div class="a m" style="left:577px;top:175px;line-height:16px;font-size:11.8px;color:#d4d4d8">持仓</div>
<div class="a m grn" style="left:737px;top:175px;line-height:16px">0.53</div>
<div class="a m grn" style="left:797px;top:175px;line-height:16px">0.12</div>
<div class="a m grn" style="left:856px;top:175px;line-height:16px">5</div>
<div class="a m grn" style="left:917px;top:175px;line-height:16px">-183.40</div>
<div class="a m grn" style="left:997px;top:175px;line-height:16px">-3.95 %</div>
<div class="a m " style="left:1066px;top:175px;line-height:16px">0.00</div>
<div class="a m " style="left:1137px;top:175px;line-height:16px">4646.84</div>
<div class="a m grn" style="left:1227px;top:175px;line-height:16px">-183.40</div>
<div class="a m grn" style="left:1317px;top:175px;line-height:16px">-3.95 %</div>
<div class="a m " style="left:1397px;top:175px;line-height:16px">0.00</div>
<div class="a m " style="left:1487px;top:175px;line-height:16px">0.00 %</div>
<div class="a m" style="left:577px;top:189px;line-height:16px;font-size:10.7px;color:#d4d4d8">2022.03.21 ~ 2022.03.27</div>
<div class="a m red" style="left:737px;top:189px;line-height:16px">2.67</div>
<div class="a m red" style="left:797px;top:189px;line-height:16px">0.11</div>
<div class="a m red" style="left:856px;top:189px;line-height:16px">30</div>
<div class="a m red" style="left:917px;top:189px;line-height:16px">97.51</div>
<div class="a m red" style="left:997px;top:189px;line-height:16px">2.14 %</div>
<div class="a m red" style="left:1066px;top:189px;line-height:16px">2431.54</div>
<div class="a m " style="left:1137px;top:189px;line-height:16px">4646.84</div>
<div class="a m grn" style="left:1227px;top:189px;line-height:16px">-303.18</div>
<div class="a m grn" style="left:1317px;top:189px;line-height:16px">-6.75 %</div>
<div class="a m red" style="left:1397px;top:189px;line-height:16px">24.9</div>
<div class="a m red" style="left:1487px;top:189px;line-height:16px">0.56 %</div>
<div class="a m" style="left:577px;top:203px;line-height:16px;font-size:10.7px;color:#d4d4d8">2022.03.14 ~ 2022.03.20</div>
<div class="a m red" style="left:737px;top:203px;line-height:16px">4.43</div>
<div class="a m red" style="left:797px;top:203px;line-height:16px">0.10</div>
<div class="a m red" style="left:856px;top:203px;line-height:16px">80</div>
<div class="a m red" style="left:917px;top:203px;line-height:16px">558.38</div>
<div class="a m red" style="left:997px;top:203px;line-height:16px">35.81 %</div>
<div class="a m grn" style="left:1066px;top:203px;line-height:16px">-500.00</div>
<div class="a m " style="left:1137px;top:203px;line-height:16px">2117.79</div>
<div class="a m " style="left:1227px;top:203px;line-height:16px">0.00</div>
<div class="a m " style="left:1317px;top:203px;line-height:16px">0.00 %</div>
<div class="a m " style="left:1397px;top:203px;line-height:16px">0</div>
<div class="a m " style="left:1487px;top:203px;line-height:16px">0.00 %</div>
<div class="a m" style="left:577px;top:217px;line-height:16px;font-size:10.7px;color:#d4d4d8">2022.03.07 ~ 2022.03.13</div>
<div class="a m red" style="left:737px;top:217px;line-height:16px">4.41</div>
<div class="a m red" style="left:797px;top:217px;line-height:16px">0.11</div>
<div class="a m red" style="left:856px;top:217px;line-height:16px">80</div>
<div class="a m red" style="left:917px;top:217px;line-height:16px">225.22</div>
<div class="a m red" style="left:997px;top:217px;line-height:16px">12.28 %</div>
<div class="a m grn" style="left:1066px;top:217px;line-height:16px">-500.00</div>
<div class="a m " style="left:1137px;top:217px;line-height:16px">2059.41</div>
<div class="a m " style="left:1227px;top:217px;line-height:16px">0.00</div>
<div class="a m " style="left:1317px;top:217px;line-height:16px">0.00 %</div>
<div class="a m " style="left:1397px;top:217px;line-height:16px">0</div>
<div class="a m " style="left:1487px;top:217px;line-height:16px">0.00 %</div>
<div class="a m" style="left:577px;top:231px;line-height:16px;font-size:10.7px;color:#d4d4d8">2022.02.28 ~ 2022.03.06</div>
<div class="a m red" style="left:737px;top:231px;line-height:16px">4.58</div>
<div class="a m red" style="left:797px;top:231px;line-height:16px">0.09</div>
<div class="a m red" style="left:856px;top:231px;line-height:16px">81</div>
<div class="a m red" style="left:917px;top:231px;line-height:16px">721.96</div>
<div class="a m red" style="left:997px;top:231px;line-height:16px">44.78 %</div>
<div class="a m grn" style="left:1066px;top:231px;line-height:16px">-700.00</div>
<div class="a m " style="left:1137px;top:231px;line-height:16px">2334.19</div>
<div class="a m " style="left:1227px;top:231px;line-height:16px">0.00</div>
<div class="a m " style="left:1317px;top:231px;line-height:16px">0.00 %</div>
<div class="a m " style="left:1397px;top:231px;line-height:16px">0</div>
<div class="a m " style="left:1487px;top:231px;line-height:16px">0.00 %</div>
<div class="a m" style="left:577px;top:245px;line-height:16px;font-size:10.7px;color:#d4d4d8">2022.02.21 ~ 2022.02.27</div>
<div class="a m red" style="left:737px;top:245px;line-height:16px">3.25</div>
<div class="a m red" style="left:797px;top:245px;line-height:16px">0.09</div>
<div class="a m red" style="left:856px;top:245px;line-height:16px">58</div>
<div class="a m red" style="left:917px;top:245px;line-height:16px">93.57</div>
<div class="a m red" style="left:997px;top:245px;line-height:16px">4.22 %</div>
<div class="a m " style="left:1066px;top:245px;line-height:16px">0.00</div>
<div class="a m " style="left:1137px;top:245px;line-height:16px">2312.23</div>
<div class="a m " style="left:1227px;top:245px;line-height:16px">0.00</div>
<div class="a m " style="left:1317px;top:245px;line-height:16px">0.00 %</div>
<div class="a m " style="left:1397px;top:245px;line-height:16px">0</div>
<div class="a m " style="left:1487px;top:245px;line-height:16px">0.00 %</div>
<div class="a m" style="left:577px;top:259px;line-height:16px;font-size:10.7px;color:#d4d4d8">2022.02.14 ~ 2022.02.20</div>
<div class="a m grn" style="left:737px;top:259px;line-height:16px">2.34</div>
<div class="a m grn" style="left:797px;top:259px;line-height:16px">0.09</div>
<div class="a m grn" style="left:856px;top:259px;line-height:16px">42</div>
<div class="a m grn" style="left:917px;top:259px;line-height:16px">-88.07</div>
<div class="a m grn" style="left:997px;top:259px;line-height:16px">-3.82 %</div>
<div class="a m " style="left:1066px;top:259px;line-height:16px">0.00</div>
<div class="a m " style="left:1137px;top:259px;line-height:16px">2218.66</div>
<div class="a m " style="left:1227px;top:259px;line-height:16px">0.00</div>
<div class="a m " style="left:1317px;top:259px;line-height:16px">0.00 %</div>
<div class="a m " style="left:1397px;top:259px;line-height:16px">0</div>
<div class="a m " style="left:1487px;top:259px;line-height:16px">0.00 %</div>
<div class="a m" style="left:577px;top:273px;line-height:16px;font-size:10.7px;color:#d4d4d8">2022.02.07 ~ 2022.02.13</div>
<div class="a m red" style="left:737px;top:273px;line-height:16px">2.34</div>
<div class="a m red" style="left:797px;top:273px;line-height:16px">0.10</div>
<div class="a m red" style="left:856px;top:273px;line-height:16px">40</div>
<div class="a m red" style="left:917px;top:273px;line-height:16px">206.19</div>
<div class="a m red" style="left:997px;top:273px;line-height:16px">9.82 %</div>
<div class="a m grn" style="left:1066px;top:273px;line-height:16px">-500.00</div>
<div class="a m " style="left:1137px;top:273px;line-height:16px">2306.73</div>
<div class="a m " style="left:1227px;top:273px;line-height:16px">0.00</div>
<div class="a m " style="left:1317px;top:273px;line-height:16px">0.00 %</div>
<div class="a m " style="left:1397px;top:273px;line-height:16px">0</div>
<div class="a m " style="left:1487px;top:273px;line-height:16px">0.00 %</div>
<div class="a m" style="left:577px;top:287px;line-height:16px;font-size:10.7px;color:#d4d4d8">2022.01.31 ~ 2022.02.06</div>
<div class="a m red" style="left:737px;top:287px;line-height:16px">2.95</div>
<div class="a m red" style="left:797px;top:287px;line-height:16px">0.10</div>
<div class="a m red" style="left:856px;top:287px;line-height:16px">53</div>
<div class="a m red" style="left:917px;top:287px;line-height:16px">391.82</div>
<div class="a m red" style="left:997px;top:287px;line-height:16px">17.74 %</div>
<div class="a m red" style="left:1066px;top:287px;line-height:16px">100.00</div>
<div class="a m " style="left:1137px;top:287px;line-height:16px">2600.54</div>
<div class="a m " style="left:1227px;top:287px;line-height:16px">0.00</div>
<div class="a m " style="left:1317px;top:287px;line-height:16px">0.00 %</div>
<div class="a m " style="left:1397px;top:287px;line-height:16px">0</div>
<div class="a m " style="left:1487px;top:287px;line-height:16px">0.00 %</div>
<div class="a m" style="left:577px;top:301px;line-height:16px;font-size:10.7px;color:#d4d4d8">2022.01.24 ~ 2022.01.30</div>
<div class="a m red" style="left:737px;top:301px;line-height:16px">3.55</div>
<div class="a m red" style="left:797px;top:301px;line-height:16px">0.10</div>
<div class="a m red" style="left:856px;top:301px;line-height:16px">63</div>
<div class="a m red" style="left:917px;top:301px;line-height:16px">269.90</div>
<div class="a m red" style="left:997px;top:301px;line-height:16px">14.68 %</div>
<div class="a m " style="left:1066px;top:301px;line-height:16px">0.00</div>
<div class="a m " style="left:1137px;top:301px;line-height:16px">2108.72</div>
<div class="a m " style="left:1227px;top:301px;line-height:16px">0.00</div>
<div class="a m " style="left:1317px;top:301px;line-height:16px">0.00 %</div>
<div class="a m " style="left:1397px;top:301px;line-height:16px">0</div>
<div class="a m " style="left:1487px;top:301px;line-height:16px">0.00 %</div>
<div class="a m" style="left:577px;top:315px;line-height:16px;font-size:10.7px;color:#d4d4d8">2022.01.17 ~ 2022.01.23</div>
<div class="a m grn" style="left:737px;top:315px;line-height:16px">35.66</div>
<div class="a m grn" style="left:797px;top:315px;line-height:16px">0.20</div>
<div class="a m grn" style="left:856px;top:315px;line-height:16px">244</div>
<div class="a m grn" style="left:917px;top:315px;line-height:16px">-50.08</div>
<div class="a m grn" style="left:997px;top:315px;line-height:16px">-2.65 %</div>
<div class="a m red" style="left:1066px;top:315px;line-height:16px">1000.00</div>
<div class="a m " style="left:1137px;top:315px;line-height:16px">1838.82</div>
<div class="a m " style="left:1227px;top:315px;line-height:16px">0.00</div>
<div class="a m " style="left:1317px;top:315px;line-height:16px">0.00 %</div>
<div class="a m " style="left:1397px;top:315px;line-height:16px">0</div>
<div class="a m " style="left:1487px;top:315px;line-height:16px">0.00 %</div>
<div class="a m" style="left:577px;top:329px;line-height:16px;font-size:10.7px;color:#d4d4d8">2022.01.10 ~ 2022.01.16</div>
<div class="a m grn" style="left:737px;top:329px;line-height:16px">9.40</div>
<div class="a m grn" style="left:797px;top:329px;line-height:16px">0.10</div>
<div class="a m grn" style="left:856px;top:329px;line-height:16px">94</div>
<div class="a m grn" style="left:917px;top:329px;line-height:16px">-111.10</div>
<div class="a m grn" style="left:997px;top:329px;line-height:16px">-11.11 %</div>
<div class="a m red" style="left:1066px;top:329px;line-height:16px">1000.00</div>
<div class="a m " style="left:1137px;top:329px;line-height:16px">888.90</div>
<div class="a m " style="left:1227px;top:329px;line-height:16px">0.00</div>
<div class="a m " style="left:1317px;top:329px;line-height:16px">0.00 %</div>
<div class="a m " style="left:1397px;top:329px;line-height:16px">0</div>
<div class="a m " style="left:1487px;top:329px;line-height:16px">0.00 %</div>
<div class="a m" style="left:577px;top:343px;line-height:16px;font-size:10.7px;color:#d4d4d8">2021.12.13 ~ 2021.12.19</div>
<div class="a m grn" style="left:737px;top:343px;line-height:16px">3.41</div>
<div class="a m grn" style="left:797px;top:343px;line-height:16px">0.15</div>
<div class="a m grn" style="left:856px;top:343px;line-height:16px">24</div>
<div class="a m grn" style="left:917px;top:343px;line-height:16px">-339.70</div>
<div class="a m grn" style="left:997px;top:343px;line-height:16px">-100.00 %</div>
<div class="a m red" style="left:1066px;top:343px;line-height:16px">339.70</div>
<div class="a m " style="left:1137px;top:343px;line-height:16px">-0.00</div>
<div class="a m " style="left:1227px;top:343px;line-height:16px">0.00</div>
<div class="a m " style="left:1317px;top:343px;line-height:16px">0.00 %</div>
<div class="a m " style="left:1397px;top:343px;line-height:16px">0</div>
<div class="a m " style="left:1487px;top:343px;line-height:16px">0.00 %</div>
<div class="a" style="left:572px;top:358px;width:1009px;height:14px;background:#1b1b1b"></div>
<div class="a" style="left:572px;top:358px;width:1009px;height:14px;overflow:hidden"><div class="a m" style="left:5px;top:0px;line-height:16px;font-size:11.8px;color:#d4d4d8">合计</div><div class="a m red" style="left:165px;top:0px;line-height:16px">79.52</div><div class="a m red" style="left:345px;top:0px;line-height:16px">1792.20</div><div class="a m red" style="left:425px;top:0px;line-height:16px">19.93 %</div><div class="a m red" style="left:494px;top:0px;line-height:16px">2671.24</div><div class="a m grn" style="left:655px;top:0px;line-height:16px">-303.18</div><div class="a m grn" style="left:745px;top:0px;line-height:16px">-6.75 %</div><div class="a m red" style="left:825px;top:0px;line-height:16px">24.9</div><div class="a m red" style="left:915px;top:0px;line-height:16px">0.56 %</div></div>
<div class="a" style="padding-left:3px;padding-top:-3px;left:554px;top:5px;width:16px;height:13px;background:#222831;border:1px solid #8aa0c0;border-radius:2.5px;color:#d0dcf0;font-size:11px;line-height:11px">–</div>
<div class="a" style="left:556px;top:41px;width:15px;height:11px;overflow:hidden;font-size:12px;color:#a8c4f0;line-height:12px">行</div>
<div class="a" style="padding-left:1.5px;padding-top:0px;left:554px;top:30px;width:16px;height:13px;background:#222831;border:1px solid #8aa0c0;border-radius:2.5px;color:#d0dcf0;font-size:11px;line-height:11px">移</div>
<div class="a" style="padding-left:3px;padding-top:0px;left:554px;top:52px;width:16px;height:13px;background:#222831;border:1px solid #8aa0c0;border-radius:2.5px;color:#d0dcf0;font-size:11px;line-height:11px">√</div>
<div class="a" style="padding-left:4.5px;padding-top:0px;left:554px;top:74px;width:16px;height:14px;background:#222831;border:1px solid #8aa0c0;border-radius:2.5px;color:#d0dcf0;font-size:11px;line-height:12px">?</div>
<div class="a" style="left:273px;top:601px;width:1599px;height:2px;background:#fff"></div>
<div class="a" style="left:273px;top:603px;width:1599px;height:19px;background:#f0f0f0"></div>
<div class="a" style="left:271px;top:603px;width:1601px;height:1px;background:#000"></div>
<div class="a" style="left:271px;top:604px;width:1601px;height:1px;background:#b8b8b8"></div>
<div class="a" style="left:271px;top:602px;width:2px;height:20px;background:linear-gradient(90deg,#e0e0e0,#707070)"></div>
<div class="a" style="left:277px;top:601px;width:88px;height:21px;background:#fff;border-right:1px solid #000;border-bottom:1px solid #000"></div>
<div class="a" style="left:277px;top:603px;width:1.300px;height:19px;background:#000"></div>
<div class="a" style="left:365px;top:605px;width:1px;height:17px;background:#808080"></div>
<div class="t ui" style="left:288px;top:606px;font-size:12.1px;letter-spacing:-.15px">USDJPY,M5</div>
<div class="t ui" style="left:377px;top:606px;font-size:12.1px;letter-spacing:-.15px;color:#808080">XAUUSD.p,H1</div>
<div class="a" style="left:469px;top:606px;width:1px;height:14px;background:#707070"></div>
<div class="t ui" style="left:481px;top:606px;font-size:12.1px;letter-spacing:-.15px;color:#808080">EURUSD,H1</div>
<div class="a" style="left:561px;top:606px;width:1px;height:14px;background:#707070"></div>
<div class="t ui" style="left:571px;top:606px;font-size:12.1px;letter-spacing:-.15px;color:#808080">EURUSD.p,H1</div>
<div class="a" style="left:661px;top:606px;width:1px;height:14px;background:#707070"></div>
<div class="a" style="left:0;top:622px;width:1872px;height:158px;background:#f0f0f0"></div>
<div class="a" style="left:0;top:622px;width:1872px;height:1px;background:#b4b4b4"></div>
<div class="a" style="left:0;top:623px;width:1872px;height:4px;background:linear-gradient(180deg,#f2f2f2,#fdfdfd)"></div>
<div class="a" style="left:1px;top:641px;width:13px;height:139px;background:#d5e3f2"></div>
<svg class="a" style="left:3px;top:629px" width="8" height="7" viewBox="0 0 8 7"><path d="M1.300 1.200L6.900 5.900M6.900 1.200L1.300 5.900" stroke="#000" stroke-width="1.900"/></svg>
<div class="a" style="left:15px;top:627px;width:1857px;height:153px;background:#fff;border-top:1px solid #828282;border-left:1px solid #828282"></div>
<div class="a" style="left:16px;top:628px;width:1856px;height:25px;background:#fff;border-bottom:1px solid #d0d0d0"></div>
<div class="t ui" style="left:22px;top:632px">订单</div>
<svg class="a" style="left:57px;top:636px" width="6" height="9" viewBox="0 0 6 9"><path d="M1 8.200L4.800 .8" stroke="#505050" stroke-width=".9"/></svg>
<div class="a" style="left:203px;top:628px;width:1px;height:25px;background:#dcdcdc"></div>
<div class="a" style="left:464px;top:628px;width:1px;height:25px;background:#dcdcdc"></div>
<div class="t ui r" style="left:205px;top:632px;width:254px">时间</div>
<div class="a" style="left:594px;top:628px;width:1px;height:25px;background:#dcdcdc"></div>
<div class="t ui r" style="left:466px;top:632px;width:123px">类型</div>
<div class="a" style="left:695px;top:628px;width:1px;height:25px;background:#dcdcdc"></div>
<div class="t ui r" style="left:596px;top:632px;width:94px">手数</div>
<div class="a" style="left:825px;top:628px;width:1px;height:25px;background:#dcdcdc"></div>
<div class="t ui r" style="left:697px;top:632px;width:123px">交易品种</div>
<div class="a" style="left:970px;top:628px;width:1px;height:25px;background:#dcdcdc"></div>
<div class="t ui r" style="left:827px;top:632px;width:138px">价格</div>
<div class="a" style="left:1115px;top:628px;width:1px;height:25px;background:#dcdcdc"></div>
<div class="t ui r" style="left:972px;top:632px;width:138px">止损</div>
<div class="a" style="left:1260px;top:628px;width:1px;height:25px;background:#dcdcdc"></div>
<div class="t ui r" style="left:1117px;top:632px;width:138px">止盈</div>
<div class="a" style="left:1405px;top:628px;width:1px;height:25px;background:#dcdcdc"></div>
<div class="t ui r" style="left:1262px;top:632px;width:138px">价格</div>
<div class="a" style="left:1550px;top:628px;width:1px;height:25px;background:#dcdcdc"></div>
<div class="t ui r" style="left:1407px;top:632px;width:138px">手续费</div>
<div class="a" style="left:1695px;top:628px;width:1px;height:25px;background:#dcdcdc"></div>
<div class="t ui r" style="left:1552px;top:632px;width:138px">库存费</div>
<div class="a" style="left:16px;top:653px;width:1856px;height:21px;background:#fff;border-bottom:1px solid #d0d0d0"></div>
<svg class="a" style="left:19px;top:656px" width="15" height="15" viewBox="0 0 15 15"><path d="M1.2 .8H8.6L11.8 4V13.2H1.2Z" fill="#fff" stroke="#505050" stroke-width="1"/><path d="M8.4 .8V4.2H11.8" fill="none" stroke="#505050" stroke-width="1"/><circle cx="11" cy="11.2" r="3.1" fill="#ff5a20" stroke="#a82000" stroke-width=".8"/></svg>
<div class="t pr" style="left:38px;top:655px">126947336</div>
<div class="a" style="left:202px;top:653px;width:1px;height:21px;background:#c8c8c8"></div>
<div class="a" style="left:463px;top:653px;width:1px;height:21px;background:#c8c8c8"></div>
<div class="t pr r" style="left:204px;top:655px;width:257px">2022.03.22 04:40:00</div>
<div class="a" style="left:593px;top:653px;width:1px;height:21px;background:#c8c8c8"></div>
<div class="t pr r" style="left:465px;top:655px;width:126px">sell</div>
<div class="a" style="left:694px;top:653px;width:1px;height:21px;background:#c8c8c8"></div>
<div class="t pr r" style="left:595px;top:655px;width:97px">0.10</div>
<div class="a" style="left:824px;top:653px;width:1px;height:21px;background:#c8c8c8"></div>
<div class="t pr r" style="left:696px;top:655px;width:126px">nzdusd</div>
<div class="a" style="left:969px;top:653px;width:1px;height:21px;background:#c8c8c8"></div>
<div class="t pr r" style="left:826px;top:655px;width:141px">0.68714</div>
<div class="a" style="left:1114px;top:653px;width:1px;height:21px;background:#c8c8c8"></div>
<div class="t pr r" style="left:971px;top:655px;width:141px">0.00000</div>
<div class="a" style="left:1259px;top:653px;width:1px;height:21px;background:#c8c8c8"></div>
<div class="t pr r" style="left:1116px;top:655px;width:141px">0.68514</div>
<div class="a" style="left:1404px;top:653px;width:1px;height:21px;background:#c8c8c8"></div>
<div class="t pr r" style="left:1261px;top:655px;width:141px">0.69641</div>
<div class="a" style="left:1549px;top:653px;width:1px;height:21px;background:#c8c8c8"></div>
<div class="t pr r" style="left:1406px;top:655px;width:141px">-0.70</div>
<div class="a" style="left:1694px;top:653px;width:1px;height:21px;background:#c8c8c8"></div>
<div class="t pr r" style="left:1551px;top:655px;width:141px">-0.93</div>
<div class="a" style="left:16px;top:674px;width:1856px;height:21px;background:#ececec;border-bottom:1px solid #d0d0d0"></div>
<svg class="a" style="left:19px;top:677px" width="15" height="15" viewBox="0 0 15 15"><path d="M1.2 .8H8.6L11.8 4V13.2H1.2Z" fill="#fff" stroke="#505050" stroke-width="1"/><path d="M8.4 .8V4.2H11.8" fill="none" stroke="#505050" stroke-width="1"/><circle cx="11" cy="11.2" r="3.1" fill="#ff5a20" stroke="#a82000" stroke-width=".8"/></svg>
<div class="t pr" style="left:38px;top:676px">126979096</div>
<div class="a" style="left:202px;top:674px;width:1px;height:21px;background:#c8c8c8"></div>
<div class="a" style="left:463px;top:674px;width:1px;height:21px;background:#c8c8c8"></div>
<div class="t pr r" style="left:204px;top:676px;width:257px">2022.03.22 11:40:00</div>
<div class="a" style="left:593px;top:674px;width:1px;height:21px;background:#c8c8c8"></div>
<div class="t pr r" style="left:465px;top:676px;width:126px">sell</div>
<div class="a" style="left:694px;top:674px;width:1px;height:21px;background:#c8c8c8"></div>
<div class="t pr r" style="left:595px;top:676px;width:97px">0.11</div>
<div class="a" style="left:824px;top:674px;width:1px;height:21px;background:#c8c8c8"></div>
<div class="t pr r" style="left:696px;top:676px;width:126px">nzdusd</div>
<div class="a" style="left:969px;top:674px;width:1px;height:21px;background:#c8c8c8"></div>
<div class="t pr r" style="left:826px;top:676px;width:141px">0.69072</div>
<div class="a" style="left:1114px;top:674px;width:1px;height:21px;background:#c8c8c8"></div>
<div class="t pr r" style="left:971px;top:676px;width:141px">0.00000</div>
<div class="a" style="left:1259px;top:674px;width:1px;height:21px;background:#c8c8c8"></div>
<div class="t pr r" style="left:1116px;top:676px;width:141px">0.68514</div>
<div class="a" style="left:1404px;top:674px;width:1px;height:21px;background:#c8c8c8"></div>
<div class="t pr r" style="left:1261px;top:676px;width:141px">0.69641</div>
<div class="a" style="left:1549px;top:674px;width:1px;height:21px;background:#c8c8c8"></div>
<div class="t pr r" style="left:1406px;top:676px;width:141px">-0.77</div>
<div class="a" style="left:1694px;top:674px;width:1px;height:21px;background:#c8c8c8"></div>
<div class="t pr r" style="left:1551px;top:676px;width:141px">-1.03</div>
<div class="a" style="left:16px;top:695px;width:1856px;height:21px;background:#fff;border-bottom:1px solid #d0d0d0"></div>
<svg class="a" style="left:19px;top:698px" width="15" height="15" viewBox="0 0 15 15"><path d="M1.2 .8H8.6L11.8 4V13.2H1.2Z" fill="#fff" stroke="#505050" stroke-width="1"/><path d="M8.4 .8V4.2H11.8" fill="none" stroke="#505050" stroke-width="1"/><circle cx="11" cy="11.2" r="3.1" fill="#ff5a20" stroke="#a82000" stroke-width=".8"/></svg>
<div class="t pr" style="left:38px;top:697px">127002360</div>
<div class="a" style="left:202px;top:695px;width:1px;height:21px;background:#c8c8c8"></div>
<div class="a" style="left:463px;top:695px;width:1px;height:21px;background:#c8c8c8"></div>
<div class="t pr r" style="left:204px;top:697px;width:257px">2022.03.22 15:50:00</div>
<div class="a" style="left:593px;top:695px;width:1px;height:21px;background:#c8c8c8"></div>
<div class="t pr r" style="left:465px;top:697px;width:126px">sell</div>
<div class="a" style="left:694px;top:695px;width:1px;height:21px;background:#c8c8c8"></div>
<div class="t pr r" style="left:595px;top:697px;width:97px">0.12</div>
<div class="a" style="left:824px;top:695px;width:1px;height:21px;background:#c8c8c8"></div>
<div class="t pr r" style="left:696px;top:697px;width:126px">nzdusd</div>
<div class="a" style="left:969px;top:695px;width:1px;height:21px;background:#c8c8c8"></div>
<div class="t pr r" style="left:826px;top:697px;width:141px">0.69482</div>
<div class="a" style="left:1114px;top:695px;width:1px;height:21px;background:#c8c8c8"></div>
<div class="t pr r" style="left:971px;top:697px;width:141px">0.00000</div>
<div class="a" style="left:1259px;top:695px;width:1px;height:21px;background:#c8c8c8"></div>
<div class="t pr r" style="left:1116px;top:697px;width:141px">0.68514</div>
<div class="a" style="left:1404px;top:695px;width:1px;height:21px;background:#c8c8c8"></div>
<div class="t pr r" style="left:1261px;top:697px;width:141px">0.69641</div>
<div class="a" style="left:1549px;top:695px;width:1px;height:21px;background:#c8c8c8"></div>
<div class="t pr r" style="left:1406px;top:697px;width:141px">-0.84</div>
<div class="a" style="left:1694px;top:695px;width:1px;height:21px;background:#c8c8c8"></div>
<div class="t pr r" style="left:1551px;top:697px;width:141px">-1.12</div>
<div class="a" style="left:16px;top:716px;width:1856px;height:21px;background:#ececec;border-bottom:1px solid #d0d0d0"></div>
<svg class="a" style="left:19px;top:719px" width="15" height="15" viewBox="0 0 15 15"><path d="M1.2 .8H8.6L11.8 4V13.2H1.2Z" fill="#fff" stroke="#505050" stroke-width="1"/><path d="M8.4 .8V4.2H11.8" fill="none" stroke="#505050" stroke-width="1"/><circle cx="11" cy="11.2" r="3.1" fill="#ff5a20" stroke="#a82000" stroke-width=".8"/></svg>
<div class="t pr" style="left:38px;top:718px">127141647</div>
<div class="a" style="left:202px;top:716px;width:1px;height:21px;background:#c8c8c8"></div>
<div class="a" style="left:463px;top:716px;width:1px;height:21px;background:#c8c8c8"></div>
<div class="t pr r" style="left:204px;top:718px;width:257px">2022.03.24 04:30:02</div>
<div class="a" style="left:593px;top:716px;width:1px;height:21px;background:#c8c8c8"></div>
<div class="t pr r" style="left:465px;top:718px;width:126px">sell</div>
<div class="a" style="left:694px;top:716px;width:1px;height:21px;background:#c8c8c8"></div>
<div class="t pr r" style="left:595px;top:718px;width:97px">0.10</div>
<div class="a" style="left:824px;top:716px;width:1px;height:21px;background:#c8c8c8"></div>
<div class="t pr r" style="left:696px;top:718px;width:126px">eurusd</div>
<div class="a" style="left:969px;top:716px;width:1px;height:21px;background:#c8c8c8"></div>
<div class="t pr r" style="left:826px;top:718px;width:141px">1.09841</div>
<div class="a" style="left:1114px;top:716px;width:1px;height:21px;background:#c8c8c8"></div>
<div class="t pr r" style="left:971px;top:718px;width:141px">0.00000</div>
<div class="a" style="left:1259px;top:716px;width:1px;height:21px;background:#c8c8c8"></div>
<div class="t pr r" style="left:1116px;top:718px;width:141px">1.09641</div>
<div class="a" style="left:1404px;top:716px;width:1px;height:21px;background:#c8c8c8"></div>
<div class="t pr r" style="left:1261px;top:718px;width:141px">1.09899</div>
<div class="a" style="left:1549px;top:716px;width:1px;height:21px;background:#c8c8c8"></div>
<div class="t pr r" style="left:1406px;top:718px;width:141px">-0.70</div>
<div class="a" style="left:1694px;top:716px;width:1px;height:21px;background:#c8c8c8"></div>
<div class="t pr r" style="left:1551px;top:718px;width:141px">0.00</div>
<div class="a" style="left:16px;top:737px;width:1856px;height:21px;background:#fff;border-bottom:1px solid #d0d0d0"></div>
<svg class="a" style="left:19px;top:740px" width="15" height="15" viewBox="0 0 15 15"><path d="M1.2 .8H8.6L11.8 4V13.2H1.2Z" fill="#fff" stroke="#505050" stroke-width="1"/><path d="M8.4 .8V4.2H11.8" fill="none" stroke="#505050" stroke-width="1"/><circle cx="11" cy="11.2" r="3.1" fill="#3aa0f0" stroke="#0a50b0" stroke-width=".8"/></svg>
<div class="t pr" style="left:38px;top:739px">127142495</div>
<div class="a" style="left:202px;top:737px;width:1px;height:21px;background:#c8c8c8"></div>
<div class="a" style="left:463px;top:737px;width:1px;height:21px;background:#c8c8c8"></div>
<div class="t pr r" style="left:204px;top:739px;width:257px">2022.03.24 04:45:00</div>
<div class="a" style="left:593px;top:737px;width:1px;height:21px;background:#c8c8c8"></div>
<div class="t pr r" style="left:465px;top:739px;width:126px">buy</div>
<div class="a" style="left:694px;top:737px;width:1px;height:21px;background:#c8c8c8"></div>
<div class="t pr r" style="left:595px;top:739px;width:97px">0.10</div>
<div class="a" style="left:824px;top:737px;width:1px;height:21px;background:#c8c8c8"></div>
<div class="t pr r" style="left:696px;top:739px;width:126px">usdjpy</div>
<div class="a" style="left:969px;top:737px;width:1px;height:21px;background:#c8c8c8"></div>
<div class="t pr r" style="left:826px;top:739px;width:141px">121.225</div>
<div class="a" style="left:1114px;top:737px;width:1px;height:21px;background:#c8c8c8"></div>
<div class="t pr r" style="left:971px;top:739px;width:141px">0.000</div>
<div class="a" style="left:1259px;top:737px;width:1px;height:21px;background:#c8c8c8"></div>
<div class="t pr r" style="left:1116px;top:739px;width:141px">121.425</div>
<div class="a" style="left:1404px;top:737px;width:1px;height:21px;background:#c8c8c8"></div>
<div class="t pr r" style="left:1261px;top:739px;width:141px">121.212</div>
<div class="a" style="left:1549px;top:737px;width:1px;height:21px;background:#c8c8c8"></div>
<div class="t pr r" style="left:1406px;top:739px;width:141px">-0.70</div>
<div class="a" style="left:1694px;top:737px;width:1px;height:21px;background:#c8c8c8"></div>
<div class="t pr r" style="left:1551px;top:739px;width:141px">0.00</div>
<div class="a" style="left:16px;top:757px;width:1856px;height:21px;background:#c8c8c8"></div>
<svg class="a" style="left:19px;top:760px" width="13" height="15" viewBox="0 0 13 15"><rect x=".5" y=".5" width="11.5" height="13.5" rx="1" fill="#fff" stroke="#707070"/><path d="M6.2 11.6L10 7.4H7.8V3.6H4.6V7.4H2.4Z" fill="#ff4a18" stroke="#a01800" stroke-width=".7"/></svg>
<div class="t ui" style="left:38px;top:760px;font-weight:bold;font-size:12.3px">余额: 4 646.84 USD&nbsp; 净值: 4 458.81&nbsp; 已用预付款: 87.58&nbsp; 可用预付款: 4 371.23&nbsp; 预付款比例: 5090.98%</div>
<div class="a" style="left:1866px;top:767px;width:5px;height:1px;background:#303030"></div>
<div class="a" style="left:1749px;top:735px;font-size:35px;font-weight:900;color:rgba(190,187,188,.88);letter-spacing:-.3px;line-height:44px">汇探网</div>
<svg class="a" style="left:0;top:0;pointer-events:none" width="1872" height="780" viewBox="0 0 1872 780"><rect x="91.300" y="295.400" width="142.900" height="21.300" fill="none" stroke="#f53232" stroke-width="2.6"/><rect x="323.200" y="332.100" width="97.200" height="139" fill="none" stroke="#f53232" stroke-width="2.6"/><path d="M204.700 321.500L212.500 335.500L208.600 334.500L211.300 496L210.300 496L201 334.800L197.200 336Z" fill="#f53232"/><path d="M458 478L469.500 463.200L471.800 467L580.500 407.200L475.400 473L477.400 477Z" fill="#f53232"/><path d="M1540.300 94.600L1556.200 83.800L1557 88L1739.200 56.200L1559.200 96.200L1558.500 100Z" fill="#f53232"/></svg>
</body></html>
